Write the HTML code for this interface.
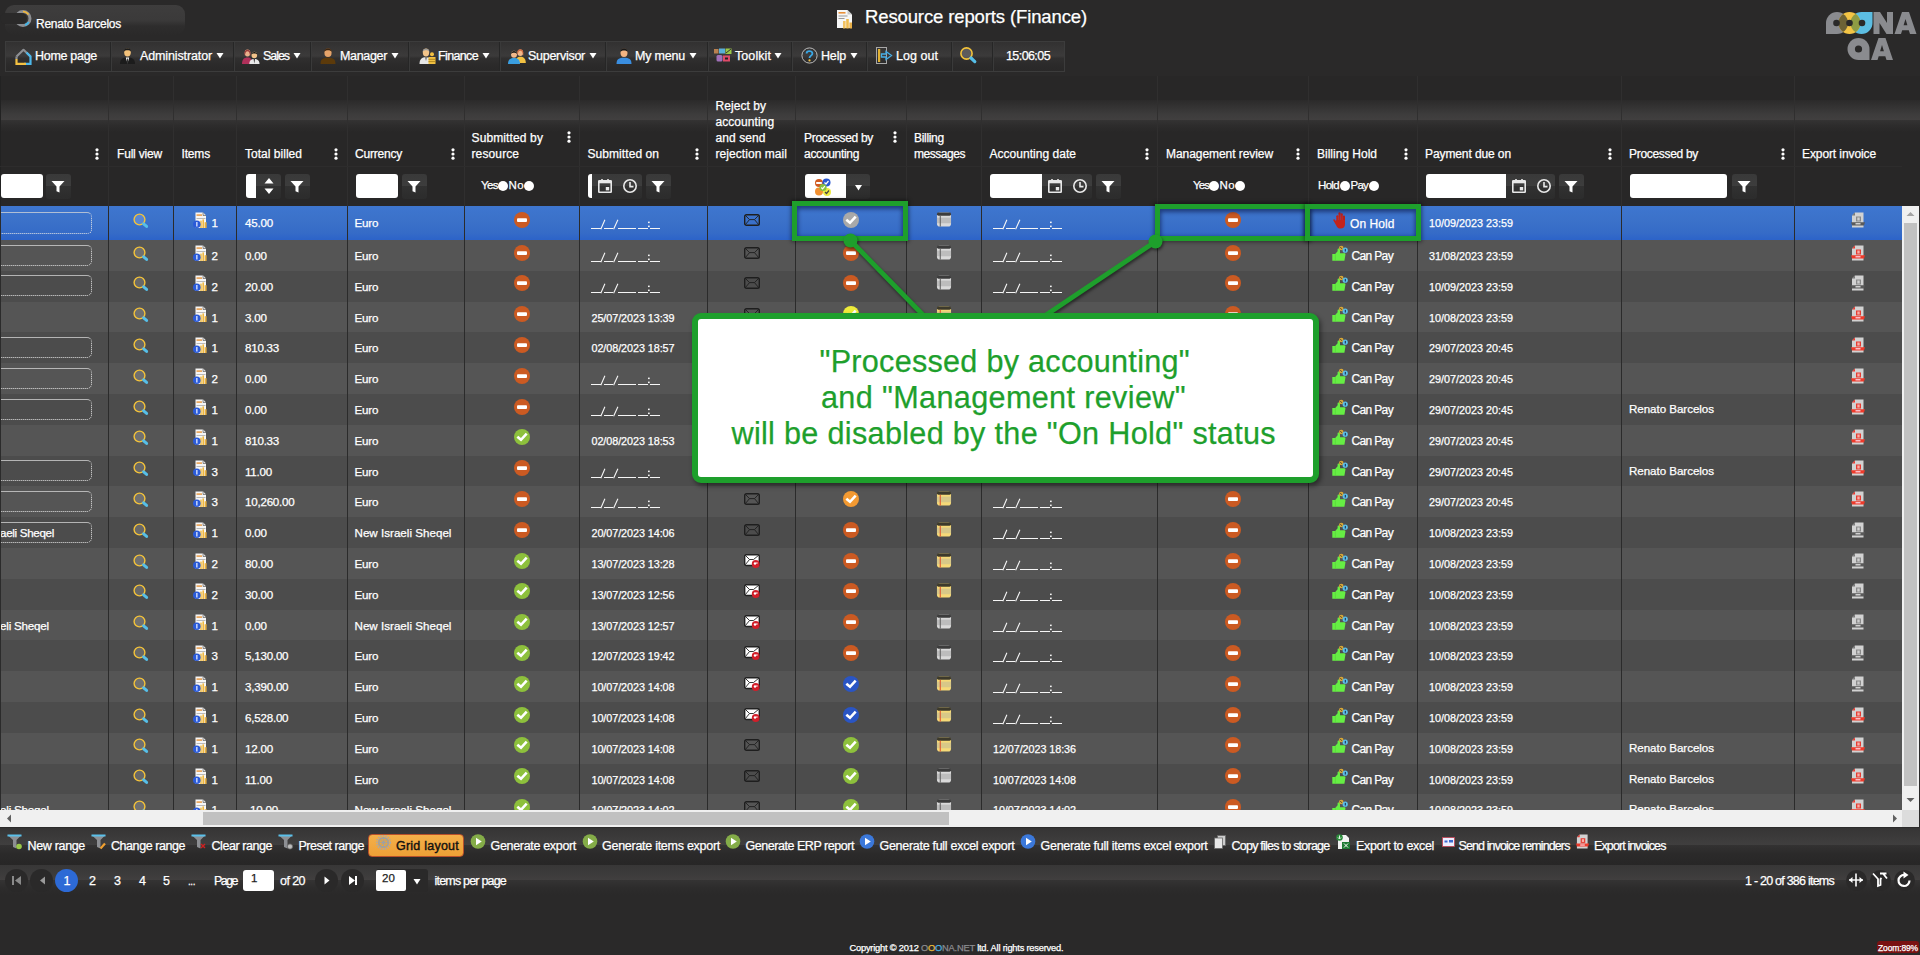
<!DOCTYPE html>
<html><head><meta charset="utf-8"><title>Resource reports (Finance)</title>
<style>
*{box-sizing:border-box}
html,body{margin:0;padding:0}
body{width:1920px;height:955px;overflow:hidden;position:relative;background:#2a2929;font-family:"Liberation Sans", sans-serif;color:#fff;font-size:12px}
.a{position:absolute}
.t{position:absolute;white-space:nowrap;line-height:1;-webkit-text-stroke:0.25px currentColor}
svg{display:block;overflow:visible}
</style></head>
<body>
<svg width="0" height="0" style="position:absolute">
<defs>
<symbol id="mag" viewBox="0 0 16 16"><circle cx="6.5" cy="6.5" r="5.4" fill="rgba(255,255,255,0.16)" stroke="#f4c33a" stroke-width="1.4"/><path d="M10.6 10.8 L13.6 13.4" stroke="#56bfe8" stroke-width="3" stroke-linecap="round"/></symbol>
<symbol id="doc" viewBox="0 0 16 16"><path d="M2.5 0.5h7.5l3 3v12.5h-10.5z" fill="#f6f6f6"/><path d="M10 0.5v3h3" fill="#d8d8d8" stroke="#333" stroke-width="0.5"/><rect x="3.5" y="2.3" width="5.5" height="1.6" fill="#e8a050"/><rect x="3.5" y="6.2" width="9" height="0.8" fill="#aaa"/><rect x="7.2" y="8.6" width="1.6" height="7.4" fill="#f2c050"/><rect x="9.4" y="7.4" width="1.6" height="8.6" fill="#f0b840"/><rect x="11.6" y="10.2" width="2" height="5.8" fill="#e8b040"/><circle cx="3.8" cy="12.2" r="3.8" fill="#2b5bd8"/><rect x="3.2" y="10" width="1.3" height="4.5" fill="#dfe8ff"/></symbol>
<symbol id="minus" viewBox="0 0 16 16"><circle cx="8" cy="8" r="8" fill="#cb5a22"/><rect x="3" y="6.2" width="10" height="3.8" rx="1" fill="#fff"/></symbol>
<symbol id="chk" viewBox="0 0 16 16"><path d="M4.3 8.5 L7 10.8 L11.8 5.6" fill="none" stroke="#fff" stroke-width="2.6" stroke-linecap="square" stroke-linejoin="miter"/></symbol>
<symbol id="env" viewBox="0 0 16 12"><rect x="0.7" y="0.7" width="14.6" height="10.6" rx="1.8" fill="none" stroke="#1e1e1e" stroke-width="1.4"/><path d="M1.2 1.2 L5.5 5.6 H10.5 L14.8 1.2 M1.2 10.8 L5.5 5.6 M14.8 10.8 L10.5 5.6" fill="none" stroke="#1e1e1e" stroke-width="0.9"/></symbol>
<symbol id="envr" viewBox="0 0 16 14"><rect x="0.7" y="0.7" width="14.6" height="10.8" rx="1.6" fill="#fff" stroke="#222" stroke-width="1.4"/><path d="M1.2 1.2 L5.5 5.5 H9.5 L14.8 1.2 M1.2 10.8 L5.5 5.5" fill="none" stroke="#222" stroke-width="0.9"/><circle cx="11.7" cy="10" r="3.9" fill="#d11f2a"/><circle cx="11" cy="9.5" r="1.2" fill="#fff"/><circle cx="12.9" cy="9" r="0.8" fill="#fff"/></symbol>
<symbol id="nbg" viewBox="0 0 16 16"><rect x="0.5" y="0.5" width="15" height="15" rx="3" fill="#dadada"/><rect x="0.5" y="0.5" width="15" height="3.5" rx="1.5" fill="#3c3c3c"/><rect x="0.5" y="6" width="15" height="6" fill="#bdbdbd"/><path d="M4 4v11.5" stroke="#555" stroke-width="1"/></symbol>
<symbol id="nby" viewBox="0 0 16 16"><rect x="0.5" y="0.5" width="15" height="15" rx="3" fill="#f6da78"/><rect x="0.5" y="0.5" width="15" height="3.5" rx="1.5" fill="#3d3a2c"/><rect x="0.5" y="6" width="15" height="6" fill="#d8c888"/><path d="M4 4v11.5" stroke="#e0502a" stroke-width="1.1"/></symbol>
<symbol id="thumb" viewBox="0 0 16 16"><path d="M0.3 9 H3.2 L5.6 6.2 V4.3 C5.6 3.3 7.6 3.1 8 4.4 V8.2 H12.4 C13.3 8.2 13.6 9 13.4 9.7 L12.4 15.8 H0.3 Z" fill="#66ee44"/><path d="M3.3 9.3 V15.6" stroke="#55cc38" stroke-width="0.6"/><circle cx="9.3" cy="3" r="2.3" fill="#d8a838"/><path d="M8.2 2.3 l2 1.5" stroke="#333" stroke-width="0.8"/><circle cx="13.2" cy="5.2" r="2.6" fill="#5cc0ea"/><rect x="12.8" y="3.9" width="0.9" height="2.6" fill="#113"/></symbol>
<symbol id="hand" viewBox="0 0 13 17"><rect x="3.3" y="3.2" width="2.1" height="8" rx="1.05" fill="#c4231b"/><rect x="5.5" y="0.3" width="2.1" height="10" rx="1.05" fill="#c4231b"/><rect x="7.7" y="1.3" width="2.1" height="9" rx="1.05" fill="#c4231b"/><rect x="9.9" y="3.4" width="2.1" height="8" rx="1.05" fill="#b82018"/><path d="M3.3 8 H12 V12 C12 15 10.3 16.6 7.6 16.6 C5.2 16.6 4 15.4 3.3 13.5 L0.4 8.6 C-0.1 7.6 0.9 6.8 1.7 7.6 L3.3 9.5z" fill="#c4231b"/></symbol>
<symbol id="pdfg" viewBox="0 0 14 16"><path d="M4 0.5h8.5v15h-11.5v-12z" fill="#d2d2d2"/><path d="M4 0.5 L1 3.5 H4z" fill="#777"/><rect x="5" y="4.5" width="5" height="5" fill="#8a8a8a"/><rect x="6.3" y="5.5" width="2.4" height="3" fill="#cfcfcf"/><path d="M0 10.2 H14 L13 13.4 H1z" fill="#5a5a5a"/><rect x="4.5" y="11.2" width="5" height="1.2" fill="#eee"/></symbol>
<symbol id="pdfr" viewBox="0 0 14 16"><path d="M4 0.5h8.5v15h-11.5v-12z" fill="#d2d2d2"/><path d="M4 0.5 L1 3.5 H4z" fill="#e83a30"/><rect x="5" y="4.5" width="5" height="5" fill="#e83a30"/><rect x="6.3" y="5.5" width="2.4" height="3" fill="#f6b0a8"/><path d="M0 10.2 H14 L13 13.4 H1z" fill="#ee3a2a"/><rect x="4.5" y="11.2" width="5" height="1.2" fill="#fde"/></symbol>
<symbol id="kebab" viewBox="0 0 4 12"><circle cx="2" cy="1.8" r="1.6" fill="#fff"/><circle cx="2" cy="6" r="1.6" fill="#fff"/><circle cx="2" cy="10.2" r="1.6" fill="#fff"/></symbol>
<symbol id="funnel" viewBox="0 0 16 16"><path d="M1.5 3h13l-5 5.5V14.5l-3-1.2V8.5z" fill="#fff"/></symbol>
<symbol id="cal" viewBox="0 0 16 16"><rect x="1.8" y="2.8" width="12.4" height="11.4" rx="0.5" fill="none" stroke="#e8e8e8" stroke-width="1.6"/><rect x="1.8" y="2.8" width="12.4" height="2.5" fill="#e8e8e8"/><rect x="4.2" y="1" width="1.6" height="3" fill="#e8e8e8"/><rect x="10.2" y="1" width="1.6" height="3" fill="#e8e8e8"/><rect x="8.8" y="9" width="3.4" height="3.4" fill="#e8e8e8"/></symbol>
<symbol id="clock" viewBox="0 0 16 16"><circle cx="8" cy="8" r="6.2" fill="none" stroke="#e8e8e8" stroke-width="1.6"/><path d="M8 4V8.6H11.5" fill="none" stroke="#e8e8e8" stroke-width="1.6"/></symbol>
<symbol id="tri" viewBox="0 0 8 8"><path d="M0 1h8L4 7.5z" fill="#fff"/></symbol>
</defs></svg><div class="a" style="left:5px;top:5px;width:180px;height:30px;border-radius:9px;background:linear-gradient(#3e3d3d 0%,#3b3a3a 50%,#2e2d2d 70%,#2a2929 100%)"></div><svg class="a" style="left:14px;top:9px" width="20" height="20"><circle cx="9" cy="9.5" r="7" fill="none" stroke="#8d8f93" stroke-width="3"/><path d="M9 2.5 A7 7 0 0 1 14.5 5.5" stroke="#f2b83a" stroke-width="1.5" fill="none"/><path d="M14.8 13 A7 7 0 0 1 11 16" stroke="#45b5e5" stroke-width="2" fill="none"/></svg><div class="a" style="left:0;top:13px;width:27px;height:11px;border-radius:6px;background:#2a2929"></div><div class="t" style="left:36px;top:17.84px;font-size:12px;color:#fff;letter-spacing:-0.248px;">Renato Barcelos</div><svg class="a" style="left:836px;top:9px" width="18" height="20" viewBox="0 0 18 20"><path d="M1 1h10.5l4.5 4.5V19H1z" fill="#f6f6f6"/><path d="M11.5 1v4.5H16z" fill="#c8c8c8"/><rect x="2.5" y="3" width="7" height="1.6" fill="#e8903a"/><rect x="2.5" y="6.5" width="9" height="1" fill="#999"/><rect x="2.5" y="9" width="6" height="1" fill="#999"/><rect x="7" y="12" width="2.6" height="7.5" fill="#f2c262"/><rect x="10.2" y="10" width="2.6" height="9.5" fill="#f0bc50"/><rect x="13.4" y="13.5" width="2.6" height="6" fill="#e8b048"/></svg><div class="t" style="left:865px;top:8.34px;font-size:18.5px;color:#fff;letter-spacing:-0.122px;">Resource reports (Finance)</div><svg class="a" style="left:1826px;top:12px" width="92" height="50" viewBox="0 0 92 50">
<defs><clipPath id="cyel"><circle cx="23.5" cy="11" r="11"/></clipPath></defs>
<path d="M0 22 V11 A11 11 0 0 1 11 0 A11 11 0 0 1 22 11 A11 11 0 0 1 11 22 Z" fill="#8a8b8f"/>
<path d="M35.5 0 H46.5 V11 A11 11 0 0 1 35.5 22 A11 11 0 0 1 24.5 11 A11 11 0 0 1 35.5 0 Z" fill="#5cbde2"/>
<circle cx="23.5" cy="11" r="11" fill="#f3c445"/>
<g clip-path="url(#cyel)"><path d="M0 22 V11 A11 11 0 0 1 11 0 A11 11 0 0 1 22 11 A11 11 0 0 1 11 22 Z" fill="#6d6236"/><path d="M35.5 0 H46.5 V11 A11 11 0 0 1 35.5 22 A11 11 0 0 1 24.5 11 A11 11 0 0 1 35.5 0 Z" fill="#8e9c44"/></g>
<circle cx="10.5" cy="11" r="3.3" fill="#2a2929"/><circle cx="23.5" cy="11" r="3.3" fill="#2a2929"/><circle cx="36" cy="11" r="3.3" fill="#2a2929"/>
<path d="M47.5 0 H54 L61 11 V0 H67 V22 H60.5 L53.5 11 V22 H47.5z" fill="#8a8b8f"/>
<path d="M68.5 22 L76 0 H83 L90.5 22 H84 L82.8 18.2 H76.2 L75 22z M77.6 13.3 H81.4 L79.5 7z" fill="#8a8b8f"/>
<path d="M43 48 H32.5 A11 11 0 0 1 21.5 37 A11 11 0 0 1 32.5 26 A11 11 0 0 1 43.5 37 V48z" fill="#8a8b8f"/><circle cx="32.5" cy="37" r="3.6" fill="#2a2929"/>
<path d="M45 48 L52.5 26 H59.5 L67 48 H60.5 L59.3 44.2 H52.7 L51.5 48z M54.1 39.3 H57.9 L56 33z" fill="#8a8b8f"/>
</svg><div class="a" style="left:5px;top:41px;width:1060px;height:31px;border:1px solid #3c3c3c;background:linear-gradient(#323131 0%,#383737 30%,#3b3a3a 48%,#302f2f 56%,#2b2a2a 80%,#292828 100%)"></div><div class="a" style="left:110px;top:42px;width:1px;height:29px;background:#262626"></div><div class="a" style="left:111px;top:42px;width:1px;height:29px;background:#3a3a3a"></div><div class="a" style="left:233px;top:42px;width:1px;height:29px;background:#262626"></div><div class="a" style="left:234px;top:42px;width:1px;height:29px;background:#3a3a3a"></div><div class="a" style="left:310px;top:42px;width:1px;height:29px;background:#262626"></div><div class="a" style="left:311px;top:42px;width:1px;height:29px;background:#3a3a3a"></div><div class="a" style="left:408px;top:42px;width:1px;height:29px;background:#262626"></div><div class="a" style="left:409px;top:42px;width:1px;height:29px;background:#3a3a3a"></div><div class="a" style="left:499px;top:42px;width:1px;height:29px;background:#262626"></div><div class="a" style="left:500px;top:42px;width:1px;height:29px;background:#3a3a3a"></div><div class="a" style="left:605px;top:42px;width:1px;height:29px;background:#262626"></div><div class="a" style="left:606px;top:42px;width:1px;height:29px;background:#3a3a3a"></div><div class="a" style="left:707px;top:42px;width:1px;height:29px;background:#262626"></div><div class="a" style="left:708px;top:42px;width:1px;height:29px;background:#3a3a3a"></div><div class="a" style="left:791px;top:42px;width:1px;height:29px;background:#262626"></div><div class="a" style="left:792px;top:42px;width:1px;height:29px;background:#3a3a3a"></div><div class="a" style="left:866px;top:42px;width:1px;height:29px;background:#262626"></div><div class="a" style="left:867px;top:42px;width:1px;height:29px;background:#3a3a3a"></div><div class="a" style="left:951px;top:42px;width:1px;height:29px;background:#262626"></div><div class="a" style="left:952px;top:42px;width:1px;height:29px;background:#3a3a3a"></div><div class="a" style="left:992px;top:42px;width:1px;height:29px;background:#262626"></div><div class="a" style="left:993px;top:42px;width:1px;height:29px;background:#3a3a3a"></div><div class="t" style="left:35px;top:50.42px;font-size:12.5px;color:#fff;letter-spacing:-0.292px;">Home page</div><div class="t" style="left:140px;top:50.42px;font-size:12.5px;color:#fff;letter-spacing:-0.126px;">Administrator</div><svg class="a" style="left:216px;top:52px" width="8" height="7"><use href="#tri"/></svg><div class="t" style="left:263px;top:50.42px;font-size:12.5px;color:#fff;letter-spacing:-1.054px;">Sales</div><svg class="a" style="left:293px;top:52px" width="8" height="7"><use href="#tri"/></svg><div class="t" style="left:340px;top:50.42px;font-size:12.5px;color:#fff;letter-spacing:-0.334px;">Manager</div><svg class="a" style="left:391px;top:52px" width="8" height="7"><use href="#tri"/></svg><div class="t" style="left:438px;top:50.42px;font-size:12.5px;color:#fff;letter-spacing:-0.639px;">Finance</div><svg class="a" style="left:482px;top:52px" width="8" height="7"><use href="#tri"/></svg><div class="t" style="left:528px;top:50.42px;font-size:12.5px;color:#fff;letter-spacing:-0.275px;">Supervisor</div><svg class="a" style="left:589px;top:52px" width="8" height="7"><use href="#tri"/></svg><div class="t" style="left:635px;top:50.42px;font-size:12.5px;color:#fff;letter-spacing:-0.201px;">My menu</div><svg class="a" style="left:689px;top:52px" width="8" height="7"><use href="#tri"/></svg><div class="t" style="left:735px;top:50.42px;font-size:12.5px;color:#fff;letter-spacing:0.081px;">Toolkit</div><svg class="a" style="left:774px;top:52px" width="8" height="7"><use href="#tri"/></svg><div class="t" style="left:821px;top:50.42px;font-size:12.5px;color:#fff;letter-spacing:-0.177px;">Help</div><svg class="a" style="left:850px;top:52px" width="8" height="7"><use href="#tri"/></svg><div class="t" style="left:896px;top:50.42px;font-size:12.5px;color:#fff;letter-spacing:0.042px;">Log out</div><div class="t" style="left:1006px;top:50.42px;font-size:12.5px;color:#fff;letter-spacing:-0.582px;">15:06:05</div><svg class="a" style="left:15px;top:48px" width="17" height="17" viewBox="0 0 17 17"><path d="M1.5 8.5 L8.5 1.8 L15.5 8.5" fill="none" stroke="#8d8f93" stroke-width="2.2" stroke-linejoin="round"/><path d="M11.5 4.5 L15.5 8.5 V15.8 H9" fill="none" stroke="#4db8ea" stroke-width="2.2"/><path d="M1.5 11 V15.8 H11" fill="none" stroke="#f4c142" stroke-width="2.2"/><path d="M1.5 8.5 V11" stroke="#8d8f93" stroke-width="2.2"/></svg><svg class="a" style="left:119px;top:46px" width="17" height="18" viewBox="0 0 17 18"><ellipse cx="8.5" cy="6.5" rx="3.3" ry="4" fill="#f4c27a"/><path d="M5 5.5 C4.5 1 12.5 1 12 5.5 C11 3.8 6 3.8 5 5.5z" fill="#1a1a1a"/><path d="M1 18 C1 13 3.5 11.5 8.5 11.5 C13.5 11.5 16 13 16 18z" fill="#1c1c1c"/><path d="M6.8 11.5 L8.5 17.5 L10.2 11.5z" fill="#fff"/><path d="M8.1 12.5 h0.8 l0.3 4 l-0.7 0.8 l-0.7 -0.8z" fill="#333"/></svg><svg class="a" style="left:242px;top:47px" width="18" height="17" viewBox="0 0 18 17"><ellipse cx="5.5" cy="6" rx="2.8" ry="3.4" fill="#eab08c"/><path d="M2.5 6.5 C2 1.5 9 1.5 8.5 6.5 L8.3 9 C7.5 7 7.8 4.5 5.5 4.3 C3.2 4.5 3.5 7 2.7 9z" fill="#9a3a3a"/><path d="M0 17 C0 12.5 2 10.5 5.5 10.5 C9 10.5 10 12 10 17z" fill="#b0305a"/><ellipse cx="12.3" cy="8" rx="2.8" ry="3.3" fill="#f2c28a"/><path d="M9.3 7.5 C9 4 15.5 4 15.3 7.5 C14.5 6 10 6 9.3 7.5z" fill="#1a1a1a"/><path d="M7.3 17 C7.3 13.5 9 12 12.3 12 C15.6 12 17.5 13.5 17.5 17z" fill="#e8e8e8"/><path d="M11.6 12 L12.3 16.5 L13 12z" fill="#333"/></svg><svg class="a" style="left:320px;top:46px" width="16" height="18" viewBox="0 0 16 18"><ellipse cx="8" cy="6.8" rx="3.6" ry="4.3" fill="#e6a46a"/><path d="M4.3 6 C3.8 1 12.2 1 11.7 6 C11 3.8 5 3.8 4.3 6z" fill="#3a2410"/><path d="M0.5 18 C0.5 13 3 11.8 8 11.8 C13 11.8 15.5 13 15.5 18z" fill="#5c3a0a"/></svg><svg class="a" style="left:419px;top:46px" width="17" height="18" viewBox="0 0 17 18"><ellipse cx="7" cy="6.5" rx="3.2" ry="3.9" fill="#f2c48a"/><path d="M3.6 6 C3 1.5 11 1.5 10.4 6 C9.5 3.8 4.5 3.8 3.6 6z" fill="#9a9a9a"/><path d="M0.5 18 C0.5 13 3 11.3 7 11.3 C10 11.3 11 12 11.5 13 V18z" fill="#e6e6e6"/><path d="M6.3 11.3 L7 15 L7.7 11.3z" fill="#333"/><rect x="9.5" y="11" width="7" height="7" fill="#f2c142"/><path d="M9.5 13.3h7M9.5 15.6h7" stroke="#a07818" stroke-width="0.8"/><circle cx="13" cy="8.3" r="2" fill="#f2c142"/></svg><svg class="a" style="left:508px;top:47px" width="18" height="17" viewBox="0 0 18 17"><ellipse cx="12.3" cy="5.8" rx="2.8" ry="3.3" fill="#f2b88a"/><path d="M9.3 5.5 C9 1 15.5 1 15.3 5.5 L15.3 8.5 C14.5 6.5 14.5 4 12.3 3.8 C10 4 10.2 6.5 9.5 8.5z" fill="#d06a40"/><path d="M7.5 16 C7.5 11.5 9.5 9.8 12.3 9.8 C15.5 9.8 17.8 11.5 17.8 16z" fill="#f2c142"/><ellipse cx="6" cy="7.3" rx="3" ry="3.5" fill="#f2b88a"/><path d="M3 7 C2.7 3 9.3 3 9 7 C8 5.3 4 5.3 3 7z" fill="#1a1a1a"/><path d="M0 17 C0 12.5 2.5 11 6 11 C9.5 11 12 12.5 12 17z" fill="#3a9ee0"/></svg><svg class="a" style="left:616px;top:46px" width="16" height="18" viewBox="0 0 16 18"><ellipse cx="8" cy="6.8" rx="3.5" ry="4.2" fill="#f2b482"/><path d="M4.3 6.3 C3.8 1 12.2 1 11.7 6.3 C11 3.8 5 3.8 4.3 6.3z" fill="#1a1a1a"/><path d="M0.5 18 C0.5 13 3 11.8 8 11.8 C13 11.8 15.5 13 15.5 18z" fill="#3a8ee0"/></svg><svg class="a" style="left:714px;top:48px" width="18" height="15" viewBox="0 0 18 15"><rect x="0" y="1" width="4.5" height="4.5" fill="#b88050"/><rect x="5" y="0.5" width="6" height="5" fill="#5ab0d8"/><rect x="11.5" y="0.5" width="6" height="5.5" fill="#9ac848"/><path d="M12 5 l5-4" stroke="#333" stroke-width="1"/><rect x="2.5" y="7" width="6" height="6.5" rx="1.5" fill="#a070b8"/><rect x="9" y="7.5" width="7" height="6" fill="#e04a68"/><rect x="11" y="9.5" width="3" height="2" fill="#222"/></svg><svg class="a" style="left:801px;top:47px" width="17" height="17" viewBox="0 0 17 17"><circle cx="8.5" cy="8.5" r="7.6" fill="none" stroke="#c8c8c8" stroke-width="0.9"/><path d="M5.6 6.4 C5.6 3.3 11.4 3.3 11.4 6.4 C11.4 8.6 8.5 8.6 8.5 11" fill="none" stroke="#3aa8e6" stroke-width="1.8"/><circle cx="8.5" cy="13.4" r="1.1" fill="#f2c142"/></svg><svg class="a" style="left:876px;top:47px" width="17" height="17" viewBox="0 0 17 17"><rect x="0.5" y="0.5" width="10" height="16" fill="none" stroke="#a8a8a8" stroke-width="1"/><rect x="2" y="2" width="2.2" height="13" fill="#e2b232"/><path d="M5.5 7 H10 V4.5 L15.5 8.5 L10 12.5 V10 H5.5z" fill="none" stroke="#45aee6" stroke-width="1.3"/></svg><svg class="a" style="left:959px;top:46px" width="20" height="20" viewBox="0 0 20 20"><circle cx="7.5" cy="7.5" r="5.6" fill="rgba(255,255,255,0.18)" stroke="#f4c33a" stroke-width="1.6"/><path d="M12 12 L15.8 15.6" stroke="#56bfe8" stroke-width="3.2" stroke-linecap="round"/></svg><div class="a" style="left:0;top:76px;width:1920px;height:130px;background:#282727"></div><div class="a" style="left:0;top:100px;width:1920px;height:32px;background:linear-gradient(#2b2a2a 0%,#353434 25%,#3d3c3c 45%,#413f3f 62%,#343333 62.5%,#2d2c2c 80%,#282727 100%)"></div><div class="a" style="left:108px;top:76px;width:1px;height:130px;background:#302f2f"></div><div class="a" style="left:173px;top:76px;width:1px;height:130px;background:#302f2f"></div><div class="a" style="left:236px;top:76px;width:1px;height:130px;background:#302f2f"></div><div class="a" style="left:347px;top:76px;width:1px;height:130px;background:#302f2f"></div><div class="a" style="left:464px;top:76px;width:1px;height:130px;background:#302f2f"></div><div class="a" style="left:579px;top:76px;width:1px;height:130px;background:#302f2f"></div><div class="a" style="left:707px;top:76px;width:1px;height:130px;background:#302f2f"></div><div class="a" style="left:795px;top:76px;width:1px;height:130px;background:#302f2f"></div><div class="a" style="left:906px;top:76px;width:1px;height:130px;background:#302f2f"></div><div class="a" style="left:981px;top:76px;width:1px;height:130px;background:#302f2f"></div><div class="a" style="left:1157px;top:76px;width:1px;height:130px;background:#302f2f"></div><div class="a" style="left:1308px;top:76px;width:1px;height:130px;background:#302f2f"></div><div class="a" style="left:1417px;top:76px;width:1px;height:130px;background:#302f2f"></div><div class="a" style="left:1621px;top:76px;width:1px;height:130px;background:#302f2f"></div><div class="a" style="left:1794px;top:76px;width:1px;height:130px;background:#302f2f"></div><div class="a" style="left:0;top:76px;width:1px;height:130px;background:#222"></div><div class="a" style="left:0;top:166px;width:1902px;height:1px;background:#2d2c2c"></div><div class="t" style="left:117px;top:148.14px;font-size:12px;color:#fff;letter-spacing:-0.186px;">Full view</div><div class="t" style="left:181.5px;top:148.14px;font-size:12px;color:#fff;letter-spacing:-0.168px;">Items</div><div class="t" style="left:245px;top:148.14px;font-size:12px;color:#fff;letter-spacing:0.025px;">Total billed</div><div class="t" style="left:355px;top:148.14px;font-size:12px;color:#fff;letter-spacing:-0.210px;">Currency</div><div class="t" style="left:471.5px;top:132.14px;font-size:12px;color:#fff;letter-spacing:0.122px;">Submitted by</div><div class="t" style="left:471.5px;top:148.14px;font-size:12px;color:#fff;letter-spacing:0.122px;">resource</div><div class="t" style="left:587.5px;top:148.14px;font-size:12px;color:#fff;letter-spacing:0.066px;">Submitted on</div><div class="t" style="left:715.5px;top:100.14px;font-size:12px;color:#fff;letter-spacing:0.063px;">Reject by</div><div class="t" style="left:715.5px;top:116.14px;font-size:12px;color:#fff;letter-spacing:0.066px;">accounting</div><div class="t" style="left:715.5px;top:132.14px;font-size:12px;color:#fff;letter-spacing:0.070px;">and send</div><div class="t" style="left:715.5px;top:148.14px;font-size:12px;color:#fff;letter-spacing:0.058px;">rejection mail</div><div class="t" style="left:804px;top:132.14px;font-size:12px;color:#fff;letter-spacing:-0.309px;">Processed by</div><div class="t" style="left:804px;top:148.14px;font-size:12px;color:#fff;letter-spacing:-0.296px;">accounting</div><div class="t" style="left:914px;top:132.14px;font-size:12px;color:#fff;letter-spacing:-0.309px;">Billing</div><div class="t" style="left:914px;top:148.14px;font-size:12px;color:#fff;letter-spacing:-0.461px;">messages</div><div class="t" style="left:989.5px;top:148.14px;font-size:12px;color:#fff;letter-spacing:0.029px;">Accounting date</div><div class="t" style="left:1166px;top:148.14px;font-size:12px;color:#fff;letter-spacing:-0.062px;">Management review</div><div class="t" style="left:1317px;top:148.14px;font-size:12px;color:#fff;letter-spacing:-0.002px;">Billing Hold</div><div class="t" style="left:1425px;top:148.14px;font-size:12px;color:#fff;letter-spacing:-0.100px;">Payment due on</div><div class="t" style="left:1629px;top:148.14px;font-size:12px;color:#fff;letter-spacing:-0.309px;">Processed by</div><div class="t" style="left:1802px;top:148.14px;font-size:12px;color:#fff;letter-spacing:-0.098px;">Export invoice</div><svg class="a" style="left:95px;top:148px" width="4" height="12"><use href="#kebab"/></svg><svg class="a" style="left:334px;top:148px" width="4" height="12"><use href="#kebab"/></svg><svg class="a" style="left:451px;top:148px" width="4" height="12"><use href="#kebab"/></svg><svg class="a" style="left:567px;top:131px" width="4" height="12"><use href="#kebab"/></svg><svg class="a" style="left:695px;top:148px" width="4" height="12"><use href="#kebab"/></svg><svg class="a" style="left:893px;top:131px" width="4" height="12"><use href="#kebab"/></svg><svg class="a" style="left:1145px;top:148px" width="4" height="12"><use href="#kebab"/></svg><svg class="a" style="left:1296px;top:148px" width="4" height="12"><use href="#kebab"/></svg><svg class="a" style="left:1404px;top:148px" width="4" height="12"><use href="#kebab"/></svg><svg class="a" style="left:1608px;top:148px" width="4" height="12"><use href="#kebab"/></svg><svg class="a" style="left:1781px;top:148px" width="4" height="12"><use href="#kebab"/></svg><div class="a" style="left:1px;top:174px;width:42px;height:24px;background:#fff;border-radius:3px"></div><div class="a" style="left:46px;top:174px;width:25px;height:25px;border-radius:3px;background:linear-gradient(#393939 0%,#3d3d3d 46%,#313131 48%,#2c2c2c 100%)"></div><svg class="a" style="left:50px;top:177.5px" width="16" height="16"><use href="#funnel"/></svg><div class="a" style="left:246px;top:174px;width:12px;height:24px;background:#fff;border-radius:3px 0 0 3px"></div><div class="a" style="left:256px;top:174px;width:25px;height:25px;border-radius:0 3px 3px 0;background:linear-gradient(#393939 0%,#3d3d3d 46%,#313131 48%,#2c2c2c 100%)"></div><svg class="a" style="left:263px;top:176px" width="12" height="20" viewBox="0 0 12 20"><path d="M1.5 7.5h9L6 2z M1.5 12.5h9L6 18z" fill="#fff"/></svg><div class="a" style="left:285px;top:174px;width:25px;height:25px;border-radius:3px;background:linear-gradient(#393939 0%,#3d3d3d 46%,#313131 48%,#2c2c2c 100%)"></div><svg class="a" style="left:289px;top:177.5px" width="16" height="16"><use href="#funnel"/></svg><div class="a" style="left:356px;top:174px;width:42px;height:24px;background:#fff;border-radius:3px"></div><div class="a" style="left:402px;top:174px;width:25px;height:25px;border-radius:3px;background:linear-gradient(#393939 0%,#3d3d3d 46%,#313131 48%,#2c2c2c 100%)"></div><svg class="a" style="left:406px;top:177.5px" width="16" height="16"><use href="#funnel"/></svg><div class="a" style="left:588px;top:174px;width:4px;height:24px;background:#fff;border-radius:3px 0 0 3px"></div><div class="a" style="left:592px;top:174px;width:50px;height:25px;border-radius:0 3px 3px 0;background:linear-gradient(#393939 0%,#3d3d3d 46%,#313131 48%,#2c2c2c 100%)"></div><svg class="a" style="left:597px;top:178px" width="16" height="16"><use href="#cal"/></svg><svg class="a" style="left:621.5px;top:178px" width="16" height="16"><use href="#clock"/></svg><div class="a" style="left:646px;top:174px;width:25px;height:25px;border-radius:3px;background:linear-gradient(#393939 0%,#3d3d3d 46%,#313131 48%,#2c2c2c 100%)"></div><svg class="a" style="left:650px;top:177.5px" width="16" height="16"><use href="#funnel"/></svg><div class="a" style="left:990px;top:174px;width:52px;height:24px;background:#fff;border-radius:3px 0 0 3px"></div><div class="a" style="left:1042px;top:174px;width:50px;height:25px;border-radius:0 3px 3px 0;background:linear-gradient(#393939 0%,#3d3d3d 46%,#313131 48%,#2c2c2c 100%)"></div><svg class="a" style="left:1047px;top:178px" width="16" height="16"><use href="#cal"/></svg><svg class="a" style="left:1071.5px;top:178px" width="16" height="16"><use href="#clock"/></svg><div class="a" style="left:1096px;top:174px;width:25px;height:25px;border-radius:3px;background:linear-gradient(#393939 0%,#3d3d3d 46%,#313131 48%,#2c2c2c 100%)"></div><svg class="a" style="left:1100px;top:177.5px" width="16" height="16"><use href="#funnel"/></svg><div class="a" style="left:1426px;top:174px;width:80px;height:24px;background:#fff;border-radius:3px 0 0 3px"></div><div class="a" style="left:1506px;top:174px;width:49px;height:25px;border-radius:0 3px 3px 0;background:linear-gradient(#393939 0%,#3d3d3d 46%,#313131 48%,#2c2c2c 100%)"></div><svg class="a" style="left:1511px;top:178px" width="16" height="16"><use href="#cal"/></svg><svg class="a" style="left:1535.5px;top:178px" width="16" height="16"><use href="#clock"/></svg><div class="a" style="left:1559px;top:174px;width:25px;height:25px;border-radius:3px;background:linear-gradient(#393939 0%,#3d3d3d 46%,#313131 48%,#2c2c2c 100%)"></div><svg class="a" style="left:1563px;top:177.5px" width="16" height="16"><use href="#funnel"/></svg><div class="a" style="left:1630px;top:174px;width:97px;height:24px;background:#fff;border-radius:3px"></div><div class="a" style="left:1732px;top:174px;width:25px;height:25px;border-radius:3px;background:linear-gradient(#393939 0%,#3d3d3d 46%,#313131 48%,#2c2c2c 100%)"></div><svg class="a" style="left:1736px;top:177.5px" width="16" height="16"><use href="#funnel"/></svg><div class="a" style="left:805px;top:174px;width:41px;height:24px;background:#fff;border-radius:3px 0 0 3px"></div><div class="a" style="left:846px;top:174px;width:24px;height:25px;border-radius:0 3px 3px 0;background:linear-gradient(#393939 0%,#3d3d3d 46%,#313131 48%,#2c2c2c 100%)"></div><svg class="a" style="left:853.5px;top:183.5px" width="9" height="7"><use href="#tri"/></svg><svg class="a" style="left:814px;top:178px" width="20" height="19" viewBox="0 0 20 19"><circle cx="5" cy="5" r="4" fill="#d05a20"/><rect x="2.2" y="4" width="5.6" height="2" fill="#fff"/><circle cx="12.5" cy="4.5" r="4" fill="#2a58d0"/><path d="M10.5 4.5l1.5 1.5l2.5-3" stroke="#fff" stroke-width="1.2" fill="none"/><circle cx="5" cy="13.5" r="4" fill="#f29030"/><circle cx="13" cy="14" r="4" fill="#eeea40"/><path d="M11 14l1.5 1.5l2.5-3" stroke="#444" stroke-width="1.2" fill="none"/><circle cx="9" cy="9.5" r="3.6" fill="#86c040"/><path d="M7.3 9.5l1.3 1.3l2.2-2.6" stroke="#fff" stroke-width="1.2" fill="none"/></svg><div class="t" style="left:481px;top:180.27px;font-size:11.5px;color:#fff;letter-spacing:-0.587px;">Yes</div><div class="a" style="left:498px;top:180.5px;width:10px;height:10px;border-radius:50%;background:#fff"></div><div class="t" style="left:508.5px;top:180.27px;font-size:11.5px;color:#fff;letter-spacing:0.400px;">No</div><div class="a" style="left:524px;top:180.5px;width:10px;height:10px;border-radius:50%;background:#fff"></div><div class="t" style="left:1193px;top:180.27px;font-size:11.5px;color:#fff;letter-spacing:-0.920px;">Yes</div><div class="a" style="left:1209px;top:180.5px;width:10px;height:10px;border-radius:50%;background:#fff"></div><div class="t" style="left:1219.5px;top:180.27px;font-size:11.5px;color:#fff;letter-spacing:0.400px;">No</div><div class="a" style="left:1235px;top:180.5px;width:10px;height:10px;border-radius:50%;background:#fff"></div><div class="t" style="left:1318px;top:180.27px;font-size:11.5px;color:#fff;letter-spacing:-0.663px;">Hold</div><div class="a" style="left:1340px;top:180.5px;width:10px;height:10px;border-radius:50%;background:#fff"></div><div class="t" style="left:1350.5px;top:180.27px;font-size:11.5px;color:#fff;letter-spacing:-0.772px;">Pay</div><div class="a" style="left:1369px;top:180.5px;width:10px;height:10px;border-radius:50%;background:#fff"></div><div class="a" style="left:0;top:206px;width:1902px;height:604px;overflow:hidden"><div class="a" style="left:0;top:0.00px;width:1902px;height:34.0px;background:linear-gradient(#3e76cf 0%,#3b71c9 45%,#356bc7 80%,#2c63c9 100%)"></div><div class="a" style="left:-10px;top:6px;width:102px;height:22px;border:1px dotted #e6e6e6;border-top:1px solid rgba(215,215,215,0.75);border-radius:0 5px 5px 0"></div><svg class="a" style="left:133px;top:7px" width="16" height="16"><use href="#mag"/></svg><svg class="a" style="left:193px;top:6px" width="16" height="16"><use href="#doc"/></svg><div class="t" style="left:211.5px;top:11.18px;font-size:11.6px;color:#fff;">1</div><div class="t" style="left:245px;top:11.18px;font-size:11.6px;color:#fff;letter-spacing:-0.232px;">45.00</div><div class="t" style="left:354.5px;top:11.18px;font-size:11.6px;color:#fff;letter-spacing:-0.214px;">Euro</div><svg class="a" style="left:514px;top:6px" width="16" height="16"><use href="#minus"/></svg><div class="a" style="left:591.0px;top:21.7px;width:9.5px;height:1.4px;background:#f6f6f6"></div><div class="a" style="left:604.0px;top:21.7px;width:9.3px;height:1.4px;background:#f6f6f6"></div><div class="a" style="left:617.8px;top:21.7px;width:18.2px;height:1.4px;background:#f6f6f6"></div><div class="a" style="left:638.3px;top:21.7px;width:9.5px;height:1.4px;background:#f6f6f6"></div><div class="a" style="left:649.8px;top:21.7px;width:9.8px;height:1.4px;background:#f6f6f6"></div><svg class="a" style="left:591px;top:12.7px" width="70" height="12"><path d="M9.8 10.3 L13.9 0.8 M22.6 10.3 L26.9 0.8" stroke="#f6f6f6" stroke-width="1.1"/><rect x="57" y="2.6" width="1.7" height="1.5" fill="#f6f6f6"/><rect x="57" y="6.6" width="1.7" height="1.5" fill="#f6f6f6"/></svg><svg class="a" style="left:744px;top:8px" width="16" height="12"><use href="#env"/></svg><svg class="a" style="left:843px;top:6px" width="16" height="16"><circle cx="8" cy="8" r="8" fill="#a9a9a9"/><use href="#chk"/></svg><svg class="a" style="left:936px;top:6px" width="16" height="15"><use href="#nbg"/></svg><div class="a" style="left:993.0px;top:21.7px;width:9.5px;height:1.4px;background:#f6f6f6"></div><div class="a" style="left:1006.0px;top:21.7px;width:9.3px;height:1.4px;background:#f6f6f6"></div><div class="a" style="left:1019.8px;top:21.7px;width:18.2px;height:1.4px;background:#f6f6f6"></div><div class="a" style="left:1040.3px;top:21.7px;width:9.5px;height:1.4px;background:#f6f6f6"></div><div class="a" style="left:1051.8px;top:21.7px;width:9.8px;height:1.4px;background:#f6f6f6"></div><svg class="a" style="left:993px;top:12.7px" width="70" height="12"><path d="M9.8 10.3 L13.9 0.8 M22.6 10.3 L26.9 0.8" stroke="#f6f6f6" stroke-width="1.1"/><rect x="57" y="2.6" width="1.7" height="1.5" fill="#f6f6f6"/><rect x="57" y="6.6" width="1.7" height="1.5" fill="#f6f6f6"/></svg><svg class="a" style="left:1225px;top:6px" width="16" height="16"><use href="#minus"/></svg><svg class="a" style="left:1333px;top:6px" width="13" height="17"><use href="#hand"/></svg><div class="t" style="left:1350px;top:11.84px;font-size:12px;color:#fff;letter-spacing:0.068px;">On Hold</div><div class="t" style="left:1429px;top:11.86px;font-size:10.8px;color:#fff;letter-spacing:-0.005px;">10/09/2023 23:59</div><svg class="a" style="left:1851px;top:6px" width="14" height="16"><use href="#pdfg"/></svg><div class="a" style="left:0;top:34.00px;width:1902px;height:30.8px;background:#555555"></div><div class="a" style="left:-10px;top:39px;width:102px;height:21px;border:1px dotted #e6e6e6;border-top:1px solid rgba(215,215,215,0.75);border-radius:0 5px 5px 0"></div><svg class="a" style="left:133px;top:40px" width="16" height="16"><use href="#mag"/></svg><svg class="a" style="left:193px;top:39px" width="16" height="16"><use href="#doc"/></svg><div class="t" style="left:211.5px;top:44.18px;font-size:11.6px;color:#fff;">2</div><div class="t" style="left:245px;top:44.18px;font-size:11.6px;color:#fff;letter-spacing:-0.226px;">0.00</div><div class="t" style="left:354.5px;top:44.18px;font-size:11.6px;color:#fff;letter-spacing:-0.214px;">Euro</div><svg class="a" style="left:514px;top:39px" width="16" height="16"><use href="#minus"/></svg><div class="a" style="left:591.0px;top:54.7px;width:9.5px;height:1.4px;background:#f6f6f6"></div><div class="a" style="left:604.0px;top:54.7px;width:9.3px;height:1.4px;background:#f6f6f6"></div><div class="a" style="left:617.8px;top:54.7px;width:18.2px;height:1.4px;background:#f6f6f6"></div><div class="a" style="left:638.3px;top:54.7px;width:9.5px;height:1.4px;background:#f6f6f6"></div><div class="a" style="left:649.8px;top:54.7px;width:9.8px;height:1.4px;background:#f6f6f6"></div><svg class="a" style="left:591px;top:45.7px" width="70" height="12"><path d="M9.8 10.3 L13.9 0.8 M22.6 10.3 L26.9 0.8" stroke="#f6f6f6" stroke-width="1.1"/><rect x="57" y="2.6" width="1.7" height="1.5" fill="#f6f6f6"/><rect x="57" y="6.6" width="1.7" height="1.5" fill="#f6f6f6"/></svg><svg class="a" style="left:744px;top:41px" width="16" height="12"><use href="#env"/></svg><svg class="a" style="left:843px;top:39px" width="16" height="16"><use href="#minus"/></svg><svg class="a" style="left:936px;top:39px" width="16" height="15"><use href="#nbg"/></svg><div class="a" style="left:993.0px;top:54.7px;width:9.5px;height:1.4px;background:#f6f6f6"></div><div class="a" style="left:1006.0px;top:54.7px;width:9.3px;height:1.4px;background:#f6f6f6"></div><div class="a" style="left:1019.8px;top:54.7px;width:18.2px;height:1.4px;background:#f6f6f6"></div><div class="a" style="left:1040.3px;top:54.7px;width:9.5px;height:1.4px;background:#f6f6f6"></div><div class="a" style="left:1051.8px;top:54.7px;width:9.8px;height:1.4px;background:#f6f6f6"></div><svg class="a" style="left:993px;top:45.7px" width="70" height="12"><path d="M9.8 10.3 L13.9 0.8 M22.6 10.3 L26.9 0.8" stroke="#f6f6f6" stroke-width="1.1"/><rect x="57" y="2.6" width="1.7" height="1.5" fill="#f6f6f6"/><rect x="57" y="6.6" width="1.7" height="1.5" fill="#f6f6f6"/></svg><svg class="a" style="left:1225px;top:39px" width="16" height="16"><use href="#minus"/></svg><svg class="a" style="left:1332px;top:39px" width="16" height="16"><use href="#thumb"/></svg><div class="t" style="left:1351.5px;top:43.84px;font-size:12px;color:#fff;letter-spacing:-0.647px;">Can Pay</div><div class="t" style="left:1429px;top:44.86px;font-size:10.8px;color:#fff;letter-spacing:-0.005px;">31/08/2023 23:59</div><svg class="a" style="left:1851px;top:39px" width="14" height="16"><use href="#pdfr"/></svg><div class="a" style="left:0;top:64.80px;width:1902px;height:30.8px;background:#4c4c4c"></div><div class="a" style="left:-10px;top:69px;width:102px;height:21px;border:1px dotted #e6e6e6;border-top:1px solid rgba(215,215,215,0.75);border-radius:0 5px 5px 0"></div><svg class="a" style="left:133px;top:70px" width="16" height="16"><use href="#mag"/></svg><svg class="a" style="left:193px;top:69px" width="16" height="16"><use href="#doc"/></svg><div class="t" style="left:211.5px;top:75.18px;font-size:11.6px;color:#fff;">2</div><div class="t" style="left:245px;top:75.18px;font-size:11.6px;color:#fff;letter-spacing:-0.232px;">20.00</div><div class="t" style="left:354.5px;top:75.18px;font-size:11.6px;color:#fff;letter-spacing:-0.214px;">Euro</div><svg class="a" style="left:514px;top:69px" width="16" height="16"><use href="#minus"/></svg><div class="a" style="left:591.0px;top:85.7px;width:9.5px;height:1.4px;background:#f6f6f6"></div><div class="a" style="left:604.0px;top:85.7px;width:9.3px;height:1.4px;background:#f6f6f6"></div><div class="a" style="left:617.8px;top:85.7px;width:18.2px;height:1.4px;background:#f6f6f6"></div><div class="a" style="left:638.3px;top:85.7px;width:9.5px;height:1.4px;background:#f6f6f6"></div><div class="a" style="left:649.8px;top:85.7px;width:9.8px;height:1.4px;background:#f6f6f6"></div><svg class="a" style="left:591px;top:76.7px" width="70" height="12"><path d="M9.8 10.3 L13.9 0.8 M22.6 10.3 L26.9 0.8" stroke="#f6f6f6" stroke-width="1.1"/><rect x="57" y="2.6" width="1.7" height="1.5" fill="#f6f6f6"/><rect x="57" y="6.6" width="1.7" height="1.5" fill="#f6f6f6"/></svg><svg class="a" style="left:744px;top:71px" width="16" height="12"><use href="#env"/></svg><svg class="a" style="left:843px;top:69px" width="16" height="16"><use href="#minus"/></svg><svg class="a" style="left:936px;top:69px" width="16" height="15"><use href="#nbg"/></svg><div class="a" style="left:993.0px;top:85.7px;width:9.5px;height:1.4px;background:#f6f6f6"></div><div class="a" style="left:1006.0px;top:85.7px;width:9.3px;height:1.4px;background:#f6f6f6"></div><div class="a" style="left:1019.8px;top:85.7px;width:18.2px;height:1.4px;background:#f6f6f6"></div><div class="a" style="left:1040.3px;top:85.7px;width:9.5px;height:1.4px;background:#f6f6f6"></div><div class="a" style="left:1051.8px;top:85.7px;width:9.8px;height:1.4px;background:#f6f6f6"></div><svg class="a" style="left:993px;top:76.7px" width="70" height="12"><path d="M9.8 10.3 L13.9 0.8 M22.6 10.3 L26.9 0.8" stroke="#f6f6f6" stroke-width="1.1"/><rect x="57" y="2.6" width="1.7" height="1.5" fill="#f6f6f6"/><rect x="57" y="6.6" width="1.7" height="1.5" fill="#f6f6f6"/></svg><svg class="a" style="left:1225px;top:69px" width="16" height="16"><use href="#minus"/></svg><svg class="a" style="left:1332px;top:69px" width="16" height="16"><use href="#thumb"/></svg><div class="t" style="left:1351.5px;top:74.84px;font-size:12px;color:#fff;letter-spacing:-0.647px;">Can Pay</div><div class="t" style="left:1429px;top:75.86px;font-size:10.8px;color:#fff;letter-spacing:-0.005px;">10/09/2023 23:59</div><svg class="a" style="left:1851px;top:69px" width="14" height="16"><use href="#pdfg"/></svg><div class="a" style="left:0;top:95.60px;width:1902px;height:30.8px;background:#555555"></div><svg class="a" style="left:133px;top:101px" width="16" height="16"><use href="#mag"/></svg><svg class="a" style="left:193px;top:100px" width="16" height="16"><use href="#doc"/></svg><div class="t" style="left:211.5px;top:106.18px;font-size:11.6px;color:#fff;">1</div><div class="t" style="left:245px;top:106.18px;font-size:11.6px;color:#fff;letter-spacing:-0.226px;">3.00</div><div class="t" style="left:354.5px;top:106.18px;font-size:11.6px;color:#fff;letter-spacing:-0.214px;">Euro</div><svg class="a" style="left:514px;top:100px" width="16" height="16"><use href="#minus"/></svg><div class="t" style="left:591.5px;top:106.86px;font-size:10.8px;color:#fff;letter-spacing:-0.068px;">25/07/2023 13:39</div><svg class="a" style="left:744px;top:102px" width="16" height="12"><use href="#env"/></svg><svg class="a" style="left:843px;top:100px" width="16" height="16"><circle cx="8" cy="8" r="8" fill="#eeec3a"/><use href="#chk"/></svg><svg class="a" style="left:936px;top:100px" width="16" height="15"><use href="#nby"/></svg><div class="a" style="left:993.0px;top:116.7px;width:9.5px;height:1.4px;background:#f6f6f6"></div><div class="a" style="left:1006.0px;top:116.7px;width:9.3px;height:1.4px;background:#f6f6f6"></div><div class="a" style="left:1019.8px;top:116.7px;width:18.2px;height:1.4px;background:#f6f6f6"></div><div class="a" style="left:1040.3px;top:116.7px;width:9.5px;height:1.4px;background:#f6f6f6"></div><div class="a" style="left:1051.8px;top:116.7px;width:9.8px;height:1.4px;background:#f6f6f6"></div><svg class="a" style="left:993px;top:107.7px" width="70" height="12"><path d="M9.8 10.3 L13.9 0.8 M22.6 10.3 L26.9 0.8" stroke="#f6f6f6" stroke-width="1.1"/><rect x="57" y="2.6" width="1.7" height="1.5" fill="#f6f6f6"/><rect x="57" y="6.6" width="1.7" height="1.5" fill="#f6f6f6"/></svg><svg class="a" style="left:1225px;top:100px" width="16" height="16"><use href="#minus"/></svg><svg class="a" style="left:1332px;top:100px" width="16" height="16"><use href="#thumb"/></svg><div class="t" style="left:1351.5px;top:105.84px;font-size:12px;color:#fff;letter-spacing:-0.647px;">Can Pay</div><div class="t" style="left:1429px;top:106.86px;font-size:10.8px;color:#fff;letter-spacing:-0.005px;">10/08/2023 23:59</div><svg class="a" style="left:1851px;top:100px" width="14" height="16"><use href="#pdfr"/></svg><div class="a" style="left:0;top:126.40px;width:1902px;height:30.8px;background:#4c4c4c"></div><div class="a" style="left:-10px;top:131px;width:102px;height:21px;border:1px dotted #e6e6e6;border-top:1px solid rgba(215,215,215,0.75);border-radius:0 5px 5px 0"></div><svg class="a" style="left:133px;top:132px" width="16" height="16"><use href="#mag"/></svg><svg class="a" style="left:193px;top:131px" width="16" height="16"><use href="#doc"/></svg><div class="t" style="left:211.5px;top:136.18px;font-size:11.6px;color:#fff;">1</div><div class="t" style="left:245px;top:136.18px;font-size:11.6px;color:#fff;letter-spacing:-0.237px;">810.33</div><div class="t" style="left:354.5px;top:136.18px;font-size:11.6px;color:#fff;letter-spacing:-0.214px;">Euro</div><svg class="a" style="left:514px;top:131px" width="16" height="16"><use href="#minus"/></svg><div class="t" style="left:591.5px;top:136.86px;font-size:10.8px;color:#fff;letter-spacing:-0.068px;">02/08/2023 18:57</div><svg class="a" style="left:744px;top:133px" width="16" height="12"><use href="#env"/></svg><svg class="a" style="left:843px;top:131px" width="16" height="16"><use href="#minus"/></svg><svg class="a" style="left:936px;top:131px" width="16" height="15"><use href="#nby"/></svg><div class="a" style="left:993.0px;top:146.7px;width:9.5px;height:1.4px;background:#f6f6f6"></div><div class="a" style="left:1006.0px;top:146.7px;width:9.3px;height:1.4px;background:#f6f6f6"></div><div class="a" style="left:1019.8px;top:146.7px;width:18.2px;height:1.4px;background:#f6f6f6"></div><div class="a" style="left:1040.3px;top:146.7px;width:9.5px;height:1.4px;background:#f6f6f6"></div><div class="a" style="left:1051.8px;top:146.7px;width:9.8px;height:1.4px;background:#f6f6f6"></div><svg class="a" style="left:993px;top:137.7px" width="70" height="12"><path d="M9.8 10.3 L13.9 0.8 M22.6 10.3 L26.9 0.8" stroke="#f6f6f6" stroke-width="1.1"/><rect x="57" y="2.6" width="1.7" height="1.5" fill="#f6f6f6"/><rect x="57" y="6.6" width="1.7" height="1.5" fill="#f6f6f6"/></svg><svg class="a" style="left:1225px;top:131px" width="16" height="16"><use href="#minus"/></svg><svg class="a" style="left:1332px;top:131px" width="16" height="16"><use href="#thumb"/></svg><div class="t" style="left:1351.5px;top:135.84px;font-size:12px;color:#fff;letter-spacing:-0.647px;">Can Pay</div><div class="t" style="left:1429px;top:136.86px;font-size:10.8px;color:#fff;letter-spacing:-0.005px;">29/07/2023 20:45</div><svg class="a" style="left:1851px;top:131px" width="14" height="16"><use href="#pdfr"/></svg><div class="a" style="left:0;top:157.20px;width:1902px;height:30.8px;background:#555555"></div><div class="a" style="left:-10px;top:162px;width:102px;height:21px;border:1px dotted #e6e6e6;border-top:1px solid rgba(215,215,215,0.75);border-radius:0 5px 5px 0"></div><svg class="a" style="left:133px;top:163px" width="16" height="16"><use href="#mag"/></svg><svg class="a" style="left:193px;top:162px" width="16" height="16"><use href="#doc"/></svg><div class="t" style="left:211.5px;top:167.18px;font-size:11.6px;color:#fff;">2</div><div class="t" style="left:245px;top:167.18px;font-size:11.6px;color:#fff;letter-spacing:-0.226px;">0.00</div><div class="t" style="left:354.5px;top:167.18px;font-size:11.6px;color:#fff;letter-spacing:-0.214px;">Euro</div><svg class="a" style="left:514px;top:162px" width="16" height="16"><use href="#minus"/></svg><div class="a" style="left:591.0px;top:177.7px;width:9.5px;height:1.4px;background:#f6f6f6"></div><div class="a" style="left:604.0px;top:177.7px;width:9.3px;height:1.4px;background:#f6f6f6"></div><div class="a" style="left:617.8px;top:177.7px;width:18.2px;height:1.4px;background:#f6f6f6"></div><div class="a" style="left:638.3px;top:177.7px;width:9.5px;height:1.4px;background:#f6f6f6"></div><div class="a" style="left:649.8px;top:177.7px;width:9.8px;height:1.4px;background:#f6f6f6"></div><svg class="a" style="left:591px;top:168.7px" width="70" height="12"><path d="M9.8 10.3 L13.9 0.8 M22.6 10.3 L26.9 0.8" stroke="#f6f6f6" stroke-width="1.1"/><rect x="57" y="2.6" width="1.7" height="1.5" fill="#f6f6f6"/><rect x="57" y="6.6" width="1.7" height="1.5" fill="#f6f6f6"/></svg><svg class="a" style="left:744px;top:164px" width="16" height="12"><use href="#env"/></svg><svg class="a" style="left:843px;top:162px" width="16" height="16"><use href="#minus"/></svg><svg class="a" style="left:936px;top:162px" width="16" height="15"><use href="#nbg"/></svg><div class="a" style="left:993.0px;top:177.7px;width:9.5px;height:1.4px;background:#f6f6f6"></div><div class="a" style="left:1006.0px;top:177.7px;width:9.3px;height:1.4px;background:#f6f6f6"></div><div class="a" style="left:1019.8px;top:177.7px;width:18.2px;height:1.4px;background:#f6f6f6"></div><div class="a" style="left:1040.3px;top:177.7px;width:9.5px;height:1.4px;background:#f6f6f6"></div><div class="a" style="left:1051.8px;top:177.7px;width:9.8px;height:1.4px;background:#f6f6f6"></div><svg class="a" style="left:993px;top:168.7px" width="70" height="12"><path d="M9.8 10.3 L13.9 0.8 M22.6 10.3 L26.9 0.8" stroke="#f6f6f6" stroke-width="1.1"/><rect x="57" y="2.6" width="1.7" height="1.5" fill="#f6f6f6"/><rect x="57" y="6.6" width="1.7" height="1.5" fill="#f6f6f6"/></svg><svg class="a" style="left:1225px;top:162px" width="16" height="16"><use href="#minus"/></svg><svg class="a" style="left:1332px;top:162px" width="16" height="16"><use href="#thumb"/></svg><div class="t" style="left:1351.5px;top:166.84px;font-size:12px;color:#fff;letter-spacing:-0.647px;">Can Pay</div><div class="t" style="left:1429px;top:167.86px;font-size:10.8px;color:#fff;letter-spacing:-0.005px;">29/07/2023 20:45</div><svg class="a" style="left:1851px;top:162px" width="14" height="16"><use href="#pdfr"/></svg><div class="a" style="left:0;top:188.00px;width:1902px;height:30.8px;background:#4c4c4c"></div><div class="a" style="left:-10px;top:193px;width:102px;height:21px;border:1px dotted #e6e6e6;border-top:1px solid rgba(215,215,215,0.75);border-radius:0 5px 5px 0"></div><svg class="a" style="left:133px;top:194px" width="16" height="16"><use href="#mag"/></svg><svg class="a" style="left:193px;top:193px" width="16" height="16"><use href="#doc"/></svg><div class="t" style="left:211.5px;top:198.18px;font-size:11.6px;color:#fff;">1</div><div class="t" style="left:245px;top:198.18px;font-size:11.6px;color:#fff;letter-spacing:-0.226px;">0.00</div><div class="t" style="left:354.5px;top:198.18px;font-size:11.6px;color:#fff;letter-spacing:-0.214px;">Euro</div><svg class="a" style="left:514px;top:193px" width="16" height="16"><use href="#minus"/></svg><div class="a" style="left:591.0px;top:208.7px;width:9.5px;height:1.4px;background:#f6f6f6"></div><div class="a" style="left:604.0px;top:208.7px;width:9.3px;height:1.4px;background:#f6f6f6"></div><div class="a" style="left:617.8px;top:208.7px;width:18.2px;height:1.4px;background:#f6f6f6"></div><div class="a" style="left:638.3px;top:208.7px;width:9.5px;height:1.4px;background:#f6f6f6"></div><div class="a" style="left:649.8px;top:208.7px;width:9.8px;height:1.4px;background:#f6f6f6"></div><svg class="a" style="left:591px;top:199.7px" width="70" height="12"><path d="M9.8 10.3 L13.9 0.8 M22.6 10.3 L26.9 0.8" stroke="#f6f6f6" stroke-width="1.1"/><rect x="57" y="2.6" width="1.7" height="1.5" fill="#f6f6f6"/><rect x="57" y="6.6" width="1.7" height="1.5" fill="#f6f6f6"/></svg><svg class="a" style="left:744px;top:195px" width="16" height="12"><use href="#env"/></svg><svg class="a" style="left:843px;top:193px" width="16" height="16"><use href="#minus"/></svg><svg class="a" style="left:936px;top:193px" width="16" height="15"><use href="#nbg"/></svg><div class="a" style="left:993.0px;top:208.7px;width:9.5px;height:1.4px;background:#f6f6f6"></div><div class="a" style="left:1006.0px;top:208.7px;width:9.3px;height:1.4px;background:#f6f6f6"></div><div class="a" style="left:1019.8px;top:208.7px;width:18.2px;height:1.4px;background:#f6f6f6"></div><div class="a" style="left:1040.3px;top:208.7px;width:9.5px;height:1.4px;background:#f6f6f6"></div><div class="a" style="left:1051.8px;top:208.7px;width:9.8px;height:1.4px;background:#f6f6f6"></div><svg class="a" style="left:993px;top:199.7px" width="70" height="12"><path d="M9.8 10.3 L13.9 0.8 M22.6 10.3 L26.9 0.8" stroke="#f6f6f6" stroke-width="1.1"/><rect x="57" y="2.6" width="1.7" height="1.5" fill="#f6f6f6"/><rect x="57" y="6.6" width="1.7" height="1.5" fill="#f6f6f6"/></svg><svg class="a" style="left:1225px;top:193px" width="16" height="16"><use href="#minus"/></svg><svg class="a" style="left:1332px;top:193px" width="16" height="16"><use href="#thumb"/></svg><div class="t" style="left:1351.5px;top:197.84px;font-size:12px;color:#fff;letter-spacing:-0.647px;">Can Pay</div><div class="t" style="left:1429px;top:198.86px;font-size:10.8px;color:#fff;letter-spacing:-0.005px;">29/07/2023 20:45</div><div class="t" style="left:1629px;top:197.18px;font-size:11.6px;color:#fff;letter-spacing:-0.051px;">Renato Barcelos</div><svg class="a" style="left:1851px;top:193px" width="14" height="16"><use href="#pdfr"/></svg><div class="a" style="left:0;top:218.80px;width:1902px;height:30.8px;background:#555555"></div><svg class="a" style="left:133px;top:224px" width="16" height="16"><use href="#mag"/></svg><svg class="a" style="left:193px;top:223px" width="16" height="16"><use href="#doc"/></svg><div class="t" style="left:211.5px;top:229.18px;font-size:11.6px;color:#fff;">1</div><div class="t" style="left:245px;top:229.18px;font-size:11.6px;color:#fff;letter-spacing:-0.237px;">810.33</div><div class="t" style="left:354.5px;top:229.18px;font-size:11.6px;color:#fff;letter-spacing:-0.214px;">Euro</div><svg class="a" style="left:514px;top:223px" width="16" height="16"><circle cx="8" cy="8" r="8" fill="#8dc03c"/><use href="#chk"/></svg><div class="t" style="left:591.5px;top:229.86px;font-size:10.8px;color:#fff;letter-spacing:-0.068px;">02/08/2023 18:53</div><svg class="a" style="left:744px;top:225px" width="16" height="12"><use href="#env"/></svg><svg class="a" style="left:843px;top:223px" width="16" height="16"><use href="#minus"/></svg><svg class="a" style="left:936px;top:223px" width="16" height="15"><use href="#nby"/></svg><div class="a" style="left:993.0px;top:239.7px;width:9.5px;height:1.4px;background:#f6f6f6"></div><div class="a" style="left:1006.0px;top:239.7px;width:9.3px;height:1.4px;background:#f6f6f6"></div><div class="a" style="left:1019.8px;top:239.7px;width:18.2px;height:1.4px;background:#f6f6f6"></div><div class="a" style="left:1040.3px;top:239.7px;width:9.5px;height:1.4px;background:#f6f6f6"></div><div class="a" style="left:1051.8px;top:239.7px;width:9.8px;height:1.4px;background:#f6f6f6"></div><svg class="a" style="left:993px;top:230.7px" width="70" height="12"><path d="M9.8 10.3 L13.9 0.8 M22.6 10.3 L26.9 0.8" stroke="#f6f6f6" stroke-width="1.1"/><rect x="57" y="2.6" width="1.7" height="1.5" fill="#f6f6f6"/><rect x="57" y="6.6" width="1.7" height="1.5" fill="#f6f6f6"/></svg><svg class="a" style="left:1225px;top:223px" width="16" height="16"><use href="#minus"/></svg><svg class="a" style="left:1332px;top:223px" width="16" height="16"><use href="#thumb"/></svg><div class="t" style="left:1351.5px;top:228.84px;font-size:12px;color:#fff;letter-spacing:-0.647px;">Can Pay</div><div class="t" style="left:1429px;top:229.86px;font-size:10.8px;color:#fff;letter-spacing:-0.005px;">29/07/2023 20:45</div><svg class="a" style="left:1851px;top:223px" width="14" height="16"><use href="#pdfr"/></svg><div class="a" style="left:0;top:249.60px;width:1902px;height:30.8px;background:#4c4c4c"></div><div class="a" style="left:-10px;top:254px;width:102px;height:21px;border:1px dotted #e6e6e6;border-top:1px solid rgba(215,215,215,0.75);border-radius:0 5px 5px 0"></div><svg class="a" style="left:133px;top:255px" width="16" height="16"><use href="#mag"/></svg><svg class="a" style="left:193px;top:254px" width="16" height="16"><use href="#doc"/></svg><div class="t" style="left:211.5px;top:260.18px;font-size:11.6px;color:#fff;">3</div><div class="t" style="left:245px;top:260.18px;font-size:11.6px;color:#fff;letter-spacing:-0.225px;">11.00</div><div class="t" style="left:354.5px;top:260.18px;font-size:11.6px;color:#fff;letter-spacing:-0.214px;">Euro</div><svg class="a" style="left:514px;top:254px" width="16" height="16"><use href="#minus"/></svg><div class="a" style="left:591.0px;top:270.7px;width:9.5px;height:1.4px;background:#f6f6f6"></div><div class="a" style="left:604.0px;top:270.7px;width:9.3px;height:1.4px;background:#f6f6f6"></div><div class="a" style="left:617.8px;top:270.7px;width:18.2px;height:1.4px;background:#f6f6f6"></div><div class="a" style="left:638.3px;top:270.7px;width:9.5px;height:1.4px;background:#f6f6f6"></div><div class="a" style="left:649.8px;top:270.7px;width:9.8px;height:1.4px;background:#f6f6f6"></div><svg class="a" style="left:591px;top:261.7px" width="70" height="12"><path d="M9.8 10.3 L13.9 0.8 M22.6 10.3 L26.9 0.8" stroke="#f6f6f6" stroke-width="1.1"/><rect x="57" y="2.6" width="1.7" height="1.5" fill="#f6f6f6"/><rect x="57" y="6.6" width="1.7" height="1.5" fill="#f6f6f6"/></svg><svg class="a" style="left:744px;top:256px" width="16" height="12"><use href="#env"/></svg><svg class="a" style="left:843px;top:254px" width="16" height="16"><use href="#minus"/></svg><svg class="a" style="left:936px;top:254px" width="16" height="15"><use href="#nby"/></svg><div class="a" style="left:993.0px;top:270.7px;width:9.5px;height:1.4px;background:#f6f6f6"></div><div class="a" style="left:1006.0px;top:270.7px;width:9.3px;height:1.4px;background:#f6f6f6"></div><div class="a" style="left:1019.8px;top:270.7px;width:18.2px;height:1.4px;background:#f6f6f6"></div><div class="a" style="left:1040.3px;top:270.7px;width:9.5px;height:1.4px;background:#f6f6f6"></div><div class="a" style="left:1051.8px;top:270.7px;width:9.8px;height:1.4px;background:#f6f6f6"></div><svg class="a" style="left:993px;top:261.7px" width="70" height="12"><path d="M9.8 10.3 L13.9 0.8 M22.6 10.3 L26.9 0.8" stroke="#f6f6f6" stroke-width="1.1"/><rect x="57" y="2.6" width="1.7" height="1.5" fill="#f6f6f6"/><rect x="57" y="6.6" width="1.7" height="1.5" fill="#f6f6f6"/></svg><svg class="a" style="left:1225px;top:254px" width="16" height="16"><use href="#minus"/></svg><svg class="a" style="left:1332px;top:254px" width="16" height="16"><use href="#thumb"/></svg><div class="t" style="left:1351.5px;top:259.84px;font-size:12px;color:#fff;letter-spacing:-0.647px;">Can Pay</div><div class="t" style="left:1429px;top:260.86px;font-size:10.8px;color:#fff;letter-spacing:-0.005px;">29/07/2023 20:45</div><div class="t" style="left:1629px;top:259.18px;font-size:11.6px;color:#fff;letter-spacing:-0.051px;">Renato Barcelos</div><svg class="a" style="left:1851px;top:254px" width="14" height="16"><use href="#pdfr"/></svg><div class="a" style="left:0;top:280.40px;width:1902px;height:30.8px;background:#555555"></div><div class="a" style="left:-10px;top:285px;width:102px;height:21px;border:1px dotted #e6e6e6;border-top:1px solid rgba(215,215,215,0.75);border-radius:0 5px 5px 0"></div><svg class="a" style="left:133px;top:286px" width="16" height="16"><use href="#mag"/></svg><svg class="a" style="left:193px;top:285px" width="16" height="16"><use href="#doc"/></svg><div class="t" style="left:211.5px;top:290.18px;font-size:11.6px;color:#fff;">3</div><div class="t" style="left:245px;top:290.18px;font-size:11.6px;color:#fff;letter-spacing:-0.229px;">10,260.00</div><div class="t" style="left:354.5px;top:290.18px;font-size:11.6px;color:#fff;letter-spacing:-0.214px;">Euro</div><svg class="a" style="left:514px;top:285px" width="16" height="16"><use href="#minus"/></svg><div class="a" style="left:591.0px;top:300.7px;width:9.5px;height:1.4px;background:#f6f6f6"></div><div class="a" style="left:604.0px;top:300.7px;width:9.3px;height:1.4px;background:#f6f6f6"></div><div class="a" style="left:617.8px;top:300.7px;width:18.2px;height:1.4px;background:#f6f6f6"></div><div class="a" style="left:638.3px;top:300.7px;width:9.5px;height:1.4px;background:#f6f6f6"></div><div class="a" style="left:649.8px;top:300.7px;width:9.8px;height:1.4px;background:#f6f6f6"></div><svg class="a" style="left:591px;top:291.7px" width="70" height="12"><path d="M9.8 10.3 L13.9 0.8 M22.6 10.3 L26.9 0.8" stroke="#f6f6f6" stroke-width="1.1"/><rect x="57" y="2.6" width="1.7" height="1.5" fill="#f6f6f6"/><rect x="57" y="6.6" width="1.7" height="1.5" fill="#f6f6f6"/></svg><svg class="a" style="left:744px;top:287px" width="16" height="12"><use href="#env"/></svg><svg class="a" style="left:843px;top:285px" width="16" height="16"><circle cx="8" cy="8" r="8" fill="#f39a32"/><use href="#chk"/></svg><svg class="a" style="left:936px;top:285px" width="16" height="15"><use href="#nby"/></svg><div class="a" style="left:993.0px;top:300.7px;width:9.5px;height:1.4px;background:#f6f6f6"></div><div class="a" style="left:1006.0px;top:300.7px;width:9.3px;height:1.4px;background:#f6f6f6"></div><div class="a" style="left:1019.8px;top:300.7px;width:18.2px;height:1.4px;background:#f6f6f6"></div><div class="a" style="left:1040.3px;top:300.7px;width:9.5px;height:1.4px;background:#f6f6f6"></div><div class="a" style="left:1051.8px;top:300.7px;width:9.8px;height:1.4px;background:#f6f6f6"></div><svg class="a" style="left:993px;top:291.7px" width="70" height="12"><path d="M9.8 10.3 L13.9 0.8 M22.6 10.3 L26.9 0.8" stroke="#f6f6f6" stroke-width="1.1"/><rect x="57" y="2.6" width="1.7" height="1.5" fill="#f6f6f6"/><rect x="57" y="6.6" width="1.7" height="1.5" fill="#f6f6f6"/></svg><svg class="a" style="left:1225px;top:285px" width="16" height="16"><use href="#minus"/></svg><svg class="a" style="left:1332px;top:285px" width="16" height="16"><use href="#thumb"/></svg><div class="t" style="left:1351.5px;top:289.84px;font-size:12px;color:#fff;letter-spacing:-0.647px;">Can Pay</div><div class="t" style="left:1429px;top:290.86px;font-size:10.8px;color:#fff;letter-spacing:-0.005px;">29/07/2023 20:45</div><svg class="a" style="left:1851px;top:285px" width="14" height="16"><use href="#pdfr"/></svg><div class="a" style="left:0;top:311.20px;width:1902px;height:30.8px;background:#4c4c4c"></div><div class="a" style="left:-10px;top:316px;width:102px;height:21px;border:1px dotted #e6e6e6;border-top:1px solid rgba(215,215,215,0.75);border-radius:0 5px 5px 0"></div><div class="t" style="left:0px;top:321.18px;font-size:11.6px;color:#fff;letter-spacing:-0.309px;">aeli Sheqel</div><svg class="a" style="left:133px;top:317px" width="16" height="16"><use href="#mag"/></svg><svg class="a" style="left:193px;top:316px" width="16" height="16"><use href="#doc"/></svg><div class="t" style="left:211.5px;top:321.18px;font-size:11.6px;color:#fff;">1</div><div class="t" style="left:245px;top:321.18px;font-size:11.6px;color:#fff;letter-spacing:-0.226px;">0.00</div><div class="t" style="left:354.5px;top:321.18px;font-size:11.6px;color:#fff;letter-spacing:0.016px;">New Israeli Sheqel</div><svg class="a" style="left:514px;top:316px" width="16" height="16"><use href="#minus"/></svg><div class="t" style="left:591.5px;top:321.86px;font-size:10.8px;color:#fff;letter-spacing:-0.068px;">20/07/2023 14:06</div><svg class="a" style="left:744px;top:318px" width="16" height="12"><use href="#env"/></svg><svg class="a" style="left:843px;top:316px" width="16" height="16"><use href="#minus"/></svg><svg class="a" style="left:936px;top:316px" width="16" height="15"><use href="#nby"/></svg><div class="a" style="left:993.0px;top:331.7px;width:9.5px;height:1.4px;background:#f6f6f6"></div><div class="a" style="left:1006.0px;top:331.7px;width:9.3px;height:1.4px;background:#f6f6f6"></div><div class="a" style="left:1019.8px;top:331.7px;width:18.2px;height:1.4px;background:#f6f6f6"></div><div class="a" style="left:1040.3px;top:331.7px;width:9.5px;height:1.4px;background:#f6f6f6"></div><div class="a" style="left:1051.8px;top:331.7px;width:9.8px;height:1.4px;background:#f6f6f6"></div><svg class="a" style="left:993px;top:322.7px" width="70" height="12"><path d="M9.8 10.3 L13.9 0.8 M22.6 10.3 L26.9 0.8" stroke="#f6f6f6" stroke-width="1.1"/><rect x="57" y="2.6" width="1.7" height="1.5" fill="#f6f6f6"/><rect x="57" y="6.6" width="1.7" height="1.5" fill="#f6f6f6"/></svg><svg class="a" style="left:1225px;top:316px" width="16" height="16"><use href="#minus"/></svg><svg class="a" style="left:1332px;top:316px" width="16" height="16"><use href="#thumb"/></svg><div class="t" style="left:1351.5px;top:320.84px;font-size:12px;color:#fff;letter-spacing:-0.647px;">Can Pay</div><div class="t" style="left:1429px;top:321.86px;font-size:10.8px;color:#fff;letter-spacing:-0.005px;">10/08/2023 23:59</div><svg class="a" style="left:1851px;top:316px" width="14" height="16"><use href="#pdfg"/></svg><div class="a" style="left:0;top:342.00px;width:1902px;height:30.8px;background:#555555"></div><svg class="a" style="left:133px;top:348px" width="16" height="16"><use href="#mag"/></svg><svg class="a" style="left:193px;top:347px" width="16" height="16"><use href="#doc"/></svg><div class="t" style="left:211.5px;top:352.18px;font-size:11.6px;color:#fff;">2</div><div class="t" style="left:245px;top:352.18px;font-size:11.6px;color:#fff;letter-spacing:-0.232px;">80.00</div><div class="t" style="left:354.5px;top:352.18px;font-size:11.6px;color:#fff;letter-spacing:-0.214px;">Euro</div><svg class="a" style="left:514px;top:347px" width="16" height="16"><circle cx="8" cy="8" r="8" fill="#8dc03c"/><use href="#chk"/></svg><div class="t" style="left:591.5px;top:352.86px;font-size:10.8px;color:#fff;letter-spacing:-0.068px;">13/07/2023 13:28</div><svg class="a" style="left:744px;top:348px" width="16" height="14"><use href="#envr"/></svg><svg class="a" style="left:843px;top:347px" width="16" height="16"><use href="#minus"/></svg><svg class="a" style="left:936px;top:347px" width="16" height="15"><use href="#nby"/></svg><div class="a" style="left:993.0px;top:362.7px;width:9.5px;height:1.4px;background:#f6f6f6"></div><div class="a" style="left:1006.0px;top:362.7px;width:9.3px;height:1.4px;background:#f6f6f6"></div><div class="a" style="left:1019.8px;top:362.7px;width:18.2px;height:1.4px;background:#f6f6f6"></div><div class="a" style="left:1040.3px;top:362.7px;width:9.5px;height:1.4px;background:#f6f6f6"></div><div class="a" style="left:1051.8px;top:362.7px;width:9.8px;height:1.4px;background:#f6f6f6"></div><svg class="a" style="left:993px;top:353.7px" width="70" height="12"><path d="M9.8 10.3 L13.9 0.8 M22.6 10.3 L26.9 0.8" stroke="#f6f6f6" stroke-width="1.1"/><rect x="57" y="2.6" width="1.7" height="1.5" fill="#f6f6f6"/><rect x="57" y="6.6" width="1.7" height="1.5" fill="#f6f6f6"/></svg><svg class="a" style="left:1225px;top:347px" width="16" height="16"><use href="#minus"/></svg><svg class="a" style="left:1332px;top:347px" width="16" height="16"><use href="#thumb"/></svg><div class="t" style="left:1351.5px;top:351.84px;font-size:12px;color:#fff;letter-spacing:-0.647px;">Can Pay</div><div class="t" style="left:1429px;top:352.86px;font-size:10.8px;color:#fff;letter-spacing:-0.005px;">10/08/2023 23:59</div><svg class="a" style="left:1851px;top:347px" width="14" height="16"><use href="#pdfg"/></svg><div class="a" style="left:0;top:372.80px;width:1902px;height:30.8px;background:#4c4c4c"></div><svg class="a" style="left:133px;top:378px" width="16" height="16"><use href="#mag"/></svg><svg class="a" style="left:193px;top:377px" width="16" height="16"><use href="#doc"/></svg><div class="t" style="left:211.5px;top:383.18px;font-size:11.6px;color:#fff;">2</div><div class="t" style="left:245px;top:383.18px;font-size:11.6px;color:#fff;letter-spacing:-0.232px;">30.00</div><div class="t" style="left:354.5px;top:383.18px;font-size:11.6px;color:#fff;letter-spacing:-0.214px;">Euro</div><svg class="a" style="left:514px;top:377px" width="16" height="16"><circle cx="8" cy="8" r="8" fill="#8dc03c"/><use href="#chk"/></svg><div class="t" style="left:591.5px;top:383.86px;font-size:10.8px;color:#fff;letter-spacing:-0.068px;">13/07/2023 12:56</div><svg class="a" style="left:744px;top:378px" width="16" height="14"><use href="#envr"/></svg><svg class="a" style="left:843px;top:377px" width="16" height="16"><use href="#minus"/></svg><svg class="a" style="left:936px;top:377px" width="16" height="15"><use href="#nby"/></svg><div class="a" style="left:993.0px;top:393.7px;width:9.5px;height:1.4px;background:#f6f6f6"></div><div class="a" style="left:1006.0px;top:393.7px;width:9.3px;height:1.4px;background:#f6f6f6"></div><div class="a" style="left:1019.8px;top:393.7px;width:18.2px;height:1.4px;background:#f6f6f6"></div><div class="a" style="left:1040.3px;top:393.7px;width:9.5px;height:1.4px;background:#f6f6f6"></div><div class="a" style="left:1051.8px;top:393.7px;width:9.8px;height:1.4px;background:#f6f6f6"></div><svg class="a" style="left:993px;top:384.7px" width="70" height="12"><path d="M9.8 10.3 L13.9 0.8 M22.6 10.3 L26.9 0.8" stroke="#f6f6f6" stroke-width="1.1"/><rect x="57" y="2.6" width="1.7" height="1.5" fill="#f6f6f6"/><rect x="57" y="6.6" width="1.7" height="1.5" fill="#f6f6f6"/></svg><svg class="a" style="left:1225px;top:377px" width="16" height="16"><use href="#minus"/></svg><svg class="a" style="left:1332px;top:377px" width="16" height="16"><use href="#thumb"/></svg><div class="t" style="left:1351.5px;top:382.84px;font-size:12px;color:#fff;letter-spacing:-0.647px;">Can Pay</div><div class="t" style="left:1429px;top:383.86px;font-size:10.8px;color:#fff;letter-spacing:-0.005px;">10/08/2023 23:59</div><svg class="a" style="left:1851px;top:377px" width="14" height="16"><use href="#pdfg"/></svg><div class="a" style="left:0;top:403.60px;width:1902px;height:30.8px;background:#555555"></div><div class="t" style="left:0px;top:414.18px;font-size:11.6px;color:#fff;letter-spacing:-0.195px;">eli Sheqel</div><svg class="a" style="left:133px;top:409px" width="16" height="16"><use href="#mag"/></svg><svg class="a" style="left:193px;top:408px" width="16" height="16"><use href="#doc"/></svg><div class="t" style="left:211.5px;top:414.18px;font-size:11.6px;color:#fff;">1</div><div class="t" style="left:245px;top:414.18px;font-size:11.6px;color:#fff;letter-spacing:-0.226px;">0.00</div><div class="t" style="left:354.5px;top:414.18px;font-size:11.6px;color:#fff;letter-spacing:0.016px;">New Israeli Sheqel</div><svg class="a" style="left:514px;top:408px" width="16" height="16"><circle cx="8" cy="8" r="8" fill="#8dc03c"/><use href="#chk"/></svg><div class="t" style="left:591.5px;top:414.86px;font-size:10.8px;color:#fff;letter-spacing:-0.068px;">13/07/2023 12:57</div><svg class="a" style="left:744px;top:409px" width="16" height="14"><use href="#envr"/></svg><svg class="a" style="left:843px;top:408px" width="16" height="16"><use href="#minus"/></svg><svg class="a" style="left:936px;top:408px" width="16" height="15"><use href="#nbg"/></svg><div class="a" style="left:993.0px;top:424.7px;width:9.5px;height:1.4px;background:#f6f6f6"></div><div class="a" style="left:1006.0px;top:424.7px;width:9.3px;height:1.4px;background:#f6f6f6"></div><div class="a" style="left:1019.8px;top:424.7px;width:18.2px;height:1.4px;background:#f6f6f6"></div><div class="a" style="left:1040.3px;top:424.7px;width:9.5px;height:1.4px;background:#f6f6f6"></div><div class="a" style="left:1051.8px;top:424.7px;width:9.8px;height:1.4px;background:#f6f6f6"></div><svg class="a" style="left:993px;top:415.7px" width="70" height="12"><path d="M9.8 10.3 L13.9 0.8 M22.6 10.3 L26.9 0.8" stroke="#f6f6f6" stroke-width="1.1"/><rect x="57" y="2.6" width="1.7" height="1.5" fill="#f6f6f6"/><rect x="57" y="6.6" width="1.7" height="1.5" fill="#f6f6f6"/></svg><svg class="a" style="left:1225px;top:408px" width="16" height="16"><use href="#minus"/></svg><svg class="a" style="left:1332px;top:408px" width="16" height="16"><use href="#thumb"/></svg><div class="t" style="left:1351.5px;top:413.84px;font-size:12px;color:#fff;letter-spacing:-0.647px;">Can Pay</div><div class="t" style="left:1429px;top:414.86px;font-size:10.8px;color:#fff;letter-spacing:-0.005px;">10/08/2023 23:59</div><svg class="a" style="left:1851px;top:408px" width="14" height="16"><use href="#pdfg"/></svg><div class="a" style="left:0;top:434.40px;width:1902px;height:30.8px;background:#4c4c4c"></div><svg class="a" style="left:133px;top:440px" width="16" height="16"><use href="#mag"/></svg><svg class="a" style="left:193px;top:439px" width="16" height="16"><use href="#doc"/></svg><div class="t" style="left:211.5px;top:444.18px;font-size:11.6px;color:#fff;">3</div><div class="t" style="left:245px;top:444.18px;font-size:11.6px;color:#fff;letter-spacing:-0.226px;">5,130.00</div><div class="t" style="left:354.5px;top:444.18px;font-size:11.6px;color:#fff;letter-spacing:-0.214px;">Euro</div><svg class="a" style="left:514px;top:439px" width="16" height="16"><circle cx="8" cy="8" r="8" fill="#8dc03c"/><use href="#chk"/></svg><div class="t" style="left:591.5px;top:444.86px;font-size:10.8px;color:#fff;letter-spacing:-0.068px;">12/07/2023 19:42</div><svg class="a" style="left:744px;top:440px" width="16" height="14"><use href="#envr"/></svg><svg class="a" style="left:843px;top:439px" width="16" height="16"><use href="#minus"/></svg><svg class="a" style="left:936px;top:439px" width="16" height="15"><use href="#nbg"/></svg><div class="a" style="left:993.0px;top:454.7px;width:9.5px;height:1.4px;background:#f6f6f6"></div><div class="a" style="left:1006.0px;top:454.7px;width:9.3px;height:1.4px;background:#f6f6f6"></div><div class="a" style="left:1019.8px;top:454.7px;width:18.2px;height:1.4px;background:#f6f6f6"></div><div class="a" style="left:1040.3px;top:454.7px;width:9.5px;height:1.4px;background:#f6f6f6"></div><div class="a" style="left:1051.8px;top:454.7px;width:9.8px;height:1.4px;background:#f6f6f6"></div><svg class="a" style="left:993px;top:445.7px" width="70" height="12"><path d="M9.8 10.3 L13.9 0.8 M22.6 10.3 L26.9 0.8" stroke="#f6f6f6" stroke-width="1.1"/><rect x="57" y="2.6" width="1.7" height="1.5" fill="#f6f6f6"/><rect x="57" y="6.6" width="1.7" height="1.5" fill="#f6f6f6"/></svg><svg class="a" style="left:1225px;top:439px" width="16" height="16"><use href="#minus"/></svg><svg class="a" style="left:1332px;top:439px" width="16" height="16"><use href="#thumb"/></svg><div class="t" style="left:1351.5px;top:443.84px;font-size:12px;color:#fff;letter-spacing:-0.647px;">Can Pay</div><div class="t" style="left:1429px;top:444.86px;font-size:10.8px;color:#fff;letter-spacing:-0.005px;">10/08/2023 23:59</div><svg class="a" style="left:1851px;top:439px" width="14" height="16"><use href="#pdfg"/></svg><div class="a" style="left:0;top:465.20px;width:1902px;height:30.8px;background:#555555"></div><svg class="a" style="left:133px;top:471px" width="16" height="16"><use href="#mag"/></svg><svg class="a" style="left:193px;top:470px" width="16" height="16"><use href="#doc"/></svg><div class="t" style="left:211.5px;top:475.18px;font-size:11.6px;color:#fff;">1</div><div class="t" style="left:245px;top:475.18px;font-size:11.6px;color:#fff;letter-spacing:-0.226px;">3,390.00</div><div class="t" style="left:354.5px;top:475.18px;font-size:11.6px;color:#fff;letter-spacing:-0.214px;">Euro</div><svg class="a" style="left:514px;top:470px" width="16" height="16"><circle cx="8" cy="8" r="8" fill="#8dc03c"/><use href="#chk"/></svg><div class="t" style="left:591.5px;top:475.86px;font-size:10.8px;color:#fff;letter-spacing:-0.068px;">10/07/2023 14:08</div><svg class="a" style="left:744px;top:471px" width="16" height="14"><use href="#envr"/></svg><svg class="a" style="left:843px;top:470px" width="16" height="16"><circle cx="8" cy="8" r="8" fill="#2a55c4"/><use href="#chk"/></svg><svg class="a" style="left:936px;top:470px" width="16" height="15"><use href="#nby"/></svg><div class="a" style="left:993.0px;top:485.7px;width:9.5px;height:1.4px;background:#f6f6f6"></div><div class="a" style="left:1006.0px;top:485.7px;width:9.3px;height:1.4px;background:#f6f6f6"></div><div class="a" style="left:1019.8px;top:485.7px;width:18.2px;height:1.4px;background:#f6f6f6"></div><div class="a" style="left:1040.3px;top:485.7px;width:9.5px;height:1.4px;background:#f6f6f6"></div><div class="a" style="left:1051.8px;top:485.7px;width:9.8px;height:1.4px;background:#f6f6f6"></div><svg class="a" style="left:993px;top:476.7px" width="70" height="12"><path d="M9.8 10.3 L13.9 0.8 M22.6 10.3 L26.9 0.8" stroke="#f6f6f6" stroke-width="1.1"/><rect x="57" y="2.6" width="1.7" height="1.5" fill="#f6f6f6"/><rect x="57" y="6.6" width="1.7" height="1.5" fill="#f6f6f6"/></svg><svg class="a" style="left:1225px;top:470px" width="16" height="16"><use href="#minus"/></svg><svg class="a" style="left:1332px;top:470px" width="16" height="16"><use href="#thumb"/></svg><div class="t" style="left:1351.5px;top:474.84px;font-size:12px;color:#fff;letter-spacing:-0.647px;">Can Pay</div><div class="t" style="left:1429px;top:475.86px;font-size:10.8px;color:#fff;letter-spacing:-0.005px;">10/08/2023 23:59</div><svg class="a" style="left:1851px;top:470px" width="14" height="16"><use href="#pdfg"/></svg><div class="a" style="left:0;top:496.00px;width:1902px;height:30.8px;background:#4c4c4c"></div><svg class="a" style="left:133px;top:502px" width="16" height="16"><use href="#mag"/></svg><svg class="a" style="left:193px;top:501px" width="16" height="16"><use href="#doc"/></svg><div class="t" style="left:211.5px;top:506.18px;font-size:11.6px;color:#fff;">1</div><div class="t" style="left:245px;top:506.18px;font-size:11.6px;color:#fff;letter-spacing:-0.226px;">6,528.00</div><div class="t" style="left:354.5px;top:506.18px;font-size:11.6px;color:#fff;letter-spacing:-0.214px;">Euro</div><svg class="a" style="left:514px;top:501px" width="16" height="16"><circle cx="8" cy="8" r="8" fill="#8dc03c"/><use href="#chk"/></svg><div class="t" style="left:591.5px;top:506.86px;font-size:10.8px;color:#fff;letter-spacing:-0.068px;">10/07/2023 14:08</div><svg class="a" style="left:744px;top:502px" width="16" height="14"><use href="#envr"/></svg><svg class="a" style="left:843px;top:501px" width="16" height="16"><circle cx="8" cy="8" r="8" fill="#2a55c4"/><use href="#chk"/></svg><svg class="a" style="left:936px;top:501px" width="16" height="15"><use href="#nby"/></svg><div class="a" style="left:993.0px;top:516.7px;width:9.5px;height:1.4px;background:#f6f6f6"></div><div class="a" style="left:1006.0px;top:516.7px;width:9.3px;height:1.4px;background:#f6f6f6"></div><div class="a" style="left:1019.8px;top:516.7px;width:18.2px;height:1.4px;background:#f6f6f6"></div><div class="a" style="left:1040.3px;top:516.7px;width:9.5px;height:1.4px;background:#f6f6f6"></div><div class="a" style="left:1051.8px;top:516.7px;width:9.8px;height:1.4px;background:#f6f6f6"></div><svg class="a" style="left:993px;top:507.7px" width="70" height="12"><path d="M9.8 10.3 L13.9 0.8 M22.6 10.3 L26.9 0.8" stroke="#f6f6f6" stroke-width="1.1"/><rect x="57" y="2.6" width="1.7" height="1.5" fill="#f6f6f6"/><rect x="57" y="6.6" width="1.7" height="1.5" fill="#f6f6f6"/></svg><svg class="a" style="left:1225px;top:501px" width="16" height="16"><use href="#minus"/></svg><svg class="a" style="left:1332px;top:501px" width="16" height="16"><use href="#thumb"/></svg><div class="t" style="left:1351.5px;top:505.84px;font-size:12px;color:#fff;letter-spacing:-0.647px;">Can Pay</div><div class="t" style="left:1429px;top:506.86px;font-size:10.8px;color:#fff;letter-spacing:-0.005px;">10/08/2023 23:59</div><svg class="a" style="left:1851px;top:501px" width="14" height="16"><use href="#pdfr"/></svg><div class="a" style="left:0;top:526.80px;width:1902px;height:30.8px;background:#555555"></div><svg class="a" style="left:133px;top:532px" width="16" height="16"><use href="#mag"/></svg><svg class="a" style="left:193px;top:531px" width="16" height="16"><use href="#doc"/></svg><div class="t" style="left:211.5px;top:537.18px;font-size:11.6px;color:#fff;">1</div><div class="t" style="left:245px;top:537.18px;font-size:11.6px;color:#fff;letter-spacing:-0.232px;">12.00</div><div class="t" style="left:354.5px;top:537.18px;font-size:11.6px;color:#fff;letter-spacing:-0.214px;">Euro</div><svg class="a" style="left:514px;top:531px" width="16" height="16"><circle cx="8" cy="8" r="8" fill="#8dc03c"/><use href="#chk"/></svg><div class="t" style="left:591.5px;top:537.86px;font-size:10.8px;color:#fff;letter-spacing:-0.068px;">10/07/2023 14:08</div><svg class="a" style="left:744px;top:533px" width="16" height="12"><use href="#env"/></svg><svg class="a" style="left:843px;top:531px" width="16" height="16"><circle cx="8" cy="8" r="8" fill="#8dc03c"/><use href="#chk"/></svg><svg class="a" style="left:936px;top:531px" width="16" height="15"><use href="#nby"/></svg><div class="t" style="left:993px;top:537.86px;font-size:10.8px;color:#fff;letter-spacing:-0.068px;">12/07/2023 18:36</div><svg class="a" style="left:1225px;top:531px" width="16" height="16"><use href="#minus"/></svg><svg class="a" style="left:1332px;top:531px" width="16" height="16"><use href="#thumb"/></svg><div class="t" style="left:1351.5px;top:536.84px;font-size:12px;color:#fff;letter-spacing:-0.647px;">Can Pay</div><div class="t" style="left:1429px;top:537.86px;font-size:10.8px;color:#fff;letter-spacing:-0.005px;">10/08/2023 23:59</div><div class="t" style="left:1629px;top:536.18px;font-size:11.6px;color:#fff;letter-spacing:-0.051px;">Renato Barcelos</div><svg class="a" style="left:1851px;top:531px" width="14" height="16"><use href="#pdfr"/></svg><div class="a" style="left:0;top:557.60px;width:1902px;height:30.8px;background:#4c4c4c"></div><svg class="a" style="left:133px;top:563px" width="16" height="16"><use href="#mag"/></svg><svg class="a" style="left:193px;top:562px" width="16" height="16"><use href="#doc"/></svg><div class="t" style="left:211.5px;top:568.18px;font-size:11.6px;color:#fff;">1</div><div class="t" style="left:245px;top:568.18px;font-size:11.6px;color:#fff;letter-spacing:-0.225px;">11.00</div><div class="t" style="left:354.5px;top:568.18px;font-size:11.6px;color:#fff;letter-spacing:-0.214px;">Euro</div><svg class="a" style="left:514px;top:562px" width="16" height="16"><circle cx="8" cy="8" r="8" fill="#8dc03c"/><use href="#chk"/></svg><div class="t" style="left:591.5px;top:568.86px;font-size:10.8px;color:#fff;letter-spacing:-0.068px;">10/07/2023 14:08</div><svg class="a" style="left:744px;top:564px" width="16" height="12"><use href="#env"/></svg><svg class="a" style="left:843px;top:562px" width="16" height="16"><circle cx="8" cy="8" r="8" fill="#8dc03c"/><use href="#chk"/></svg><svg class="a" style="left:936px;top:562px" width="16" height="15"><use href="#nbg"/></svg><div class="t" style="left:993px;top:568.86px;font-size:10.8px;color:#fff;letter-spacing:-0.068px;">10/07/2023 14:08</div><svg class="a" style="left:1225px;top:562px" width="16" height="16"><use href="#minus"/></svg><svg class="a" style="left:1332px;top:562px" width="16" height="16"><use href="#thumb"/></svg><div class="t" style="left:1351.5px;top:567.84px;font-size:12px;color:#fff;letter-spacing:-0.647px;">Can Pay</div><div class="t" style="left:1429px;top:568.86px;font-size:10.8px;color:#fff;letter-spacing:-0.005px;">10/08/2023 23:59</div><div class="t" style="left:1629px;top:567.18px;font-size:11.6px;color:#fff;letter-spacing:-0.051px;">Renato Barcelos</div><svg class="a" style="left:1851px;top:562px" width="14" height="16"><use href="#pdfr"/></svg><div class="a" style="left:0;top:588.40px;width:1902px;height:30.8px;background:#555555"></div><div class="t" style="left:0px;top:598.18px;font-size:11.6px;color:#fff;letter-spacing:-0.195px;">eli Sheqel</div><svg class="a" style="left:133px;top:594px" width="16" height="16"><use href="#mag"/></svg><svg class="a" style="left:193px;top:593px" width="16" height="16"><use href="#doc"/></svg><div class="t" style="left:211.5px;top:598.18px;font-size:11.6px;color:#fff;">1</div><div class="t" style="left:250px;top:598.18px;font-size:11.6px;color:#fff;letter-spacing:-0.232px;">10.00</div><div class="t" style="left:354.5px;top:598.18px;font-size:11.6px;color:#fff;letter-spacing:0.016px;">New Israeli Sheqel</div><svg class="a" style="left:514px;top:593px" width="16" height="16"><circle cx="8" cy="8" r="8" fill="#8dc03c"/><use href="#chk"/></svg><div class="t" style="left:591.5px;top:598.86px;font-size:10.8px;color:#fff;letter-spacing:-0.068px;">10/07/2023 14:02</div><svg class="a" style="left:744px;top:595px" width="16" height="12"><use href="#env"/></svg><svg class="a" style="left:843px;top:593px" width="16" height="16"><circle cx="8" cy="8" r="8" fill="#8dc03c"/><use href="#chk"/></svg><svg class="a" style="left:936px;top:593px" width="16" height="15"><use href="#nbg"/></svg><div class="t" style="left:993px;top:598.86px;font-size:10.8px;color:#fff;letter-spacing:-0.068px;">10/07/2023 14:02</div><svg class="a" style="left:1225px;top:593px" width="16" height="16"><use href="#minus"/></svg><svg class="a" style="left:1332px;top:593px" width="16" height="16"><use href="#thumb"/></svg><div class="t" style="left:1351.5px;top:597.84px;font-size:12px;color:#fff;letter-spacing:-0.647px;">Can Pay</div><div class="t" style="left:1429px;top:598.86px;font-size:10.8px;color:#fff;letter-spacing:-0.005px;">10/08/2023 23:59</div><div class="t" style="left:1629px;top:597.18px;font-size:11.6px;color:#fff;letter-spacing:-0.051px;">Renato Barcelos</div><svg class="a" style="left:1851px;top:593px" width="14" height="16"><use href="#pdfr"/></svg><div class="a" style="left:108px;top:0;width:1px;height:604px;background:#2b2b2b"></div><div class="a" style="left:173px;top:0;width:1px;height:604px;background:#2b2b2b"></div><div class="a" style="left:236px;top:0;width:1px;height:604px;background:#2b2b2b"></div><div class="a" style="left:347px;top:0;width:1px;height:604px;background:#2b2b2b"></div><div class="a" style="left:464px;top:0;width:1px;height:604px;background:#2b2b2b"></div><div class="a" style="left:579px;top:0;width:1px;height:604px;background:#2b2b2b"></div><div class="a" style="left:707px;top:0;width:1px;height:604px;background:#2b2b2b"></div><div class="a" style="left:795px;top:0;width:1px;height:604px;background:#2b2b2b"></div><div class="a" style="left:906px;top:0;width:1px;height:604px;background:#2b2b2b"></div><div class="a" style="left:981px;top:0;width:1px;height:604px;background:#2b2b2b"></div><div class="a" style="left:1157px;top:0;width:1px;height:604px;background:#2b2b2b"></div><div class="a" style="left:1308px;top:0;width:1px;height:604px;background:#2b2b2b"></div><div class="a" style="left:1417px;top:0;width:1px;height:604px;background:#2b2b2b"></div><div class="a" style="left:1621px;top:0;width:1px;height:604px;background:#2b2b2b"></div><div class="a" style="left:1794px;top:0;width:1px;height:604px;background:#2b2b2b"></div><div class="a" style="left:0;top:0;width:1px;height:604px;background:#2b2b2b"></div></div><div class="a" style="left:1902px;top:206px;width:17px;height:604px;background:#f0f0f0"></div><div class="a" style="left:1904px;top:223px;width:13px;height:563px;background:#c1c1c1"></div><svg class="a" style="left:1905px;top:210px" width="11" height="8"><path d="M1.5 6h8L5.5 2z" fill="#a3a3a3"/></svg><svg class="a" style="left:1905px;top:796px" width="11" height="8"><path d="M1.5 2h8L5.5 6z" fill="#606060"/></svg><div class="a" style="left:1919px;top:206px;width:1px;height:621px;background:#2a2929"></div><div class="a" style="left:0;top:810px;width:1902px;height:17px;background:#f0f0f0"></div><div class="a" style="left:203px;top:812px;width:746px;height:13px;background:#c1c1c1"></div><svg class="a" style="left:5px;top:813px" width="8" height="11"><path d="M6 1.5v8L2 5.5z" fill="#606060"/></svg><svg class="a" style="left:1891px;top:813px" width="8" height="11"><path d="M2 1.5v8L6 5.5z" fill="#606060"/></svg><div class="a" style="left:1902px;top:810px;width:17px;height:17px;background:#dcdcdc"></div><div class="a" style="left:0;top:827px;width:1920px;height:38px;background:linear-gradient(#272626 0%,#363535 4%,#3c3b3b 30%,#403f3f 47%,#333232 47.5%,#2b2a2a 70%,#272626 100%)"></div><div class="a" style="left:0;top:865px;width:1920px;height:35px;background:linear-gradient(#383737 0%,#3c3b3b 25%,#413f3f 43%,#343333 43.5%,#2d2c2c 65%,#2a2929 85%,#2a2929 100%)"></div><div class="t" style="left:27.5px;top:840.42px;font-size:12.5px;color:#fff;letter-spacing:-0.328px;">New range</div><svg class="a" style="left:7px;top:834px" width="16" height="16" viewBox="0 0 16 16"><path d="M0.5 1h14l-5 5v8.5l-3.5-1.5V6z" fill="#8d8f93"/><rect x="0.5" y="0.5" width="14" height="2" fill="#5ac0ea"/><circle cx="12" cy="12.5" r="2.8" fill="#9ac848"/></svg><div class="t" style="left:111px;top:840.42px;font-size:12.5px;color:#fff;letter-spacing:-0.436px;">Change range</div><svg class="a" style="left:91px;top:834px" width="16" height="16" viewBox="0 0 16 16"><path d="M0.5 1h14l-5 5v8.5l-3.5-1.5V6z" fill="#8d8f93"/><rect x="0.5" y="0.5" width="14" height="2" fill="#5ac0ea"/><path d="M9.5 14.5 L14 9.5" stroke="#f0a030" stroke-width="2.2"/></svg><div class="t" style="left:211.5px;top:840.42px;font-size:12.5px;color:#fff;letter-spacing:-0.438px;">Clear range</div><svg class="a" style="left:191px;top:834px" width="16" height="16" viewBox="0 0 16 16"><path d="M0.5 1h14l-5 5v8.5l-3.5-1.5V6z" fill="#8d8f93"/><rect x="0.5" y="0.5" width="14" height="2" fill="#5ac0ea"/><path d="M10 10l4 4M14 10l-4 4" stroke="#d02020" stroke-width="1.4"/></svg><div class="t" style="left:298.5px;top:840.42px;font-size:12.5px;color:#fff;letter-spacing:-0.506px;">Preset range</div><svg class="a" style="left:278px;top:834px" width="16" height="16" viewBox="0 0 16 16"><path d="M0.5 1h14l-5 5v8.5l-3.5-1.5V6z" fill="#8d8f93"/><rect x="0.5" y="0.5" width="14" height="2" fill="#5ac0ea"/><circle cx="12" cy="12.5" r="2.6" fill="#bbb" stroke="#666" stroke-width="0.8"/></svg><div class="t" style="left:490.5px;top:840.42px;font-size:12.5px;color:#fff;letter-spacing:-0.322px;">Generate export</div><svg class="a" style="left:470px;top:834px" width="16" height="16"><circle cx="8" cy="7.5" r="7.3" fill="#84ac48"/><path d="M6 3.8v7.4l5.8-3.7z" fill="#fff"/></svg><div class="t" style="left:602px;top:840.42px;font-size:12.5px;color:#fff;letter-spacing:-0.270px;">Generate items export</div><svg class="a" style="left:582px;top:834px" width="16" height="16"><circle cx="8" cy="7.5" r="7.3" fill="#84ac48"/><path d="M6 3.8v7.4l5.8-3.7z" fill="#fff"/></svg><div class="t" style="left:745.5px;top:840.42px;font-size:12.5px;color:#fff;letter-spacing:-0.458px;">Generate ERP report</div><svg class="a" style="left:725px;top:834px" width="16" height="16"><circle cx="8" cy="7.5" r="7.3" fill="#84ac48"/><path d="M6 3.8v7.4l5.8-3.7z" fill="#fff"/></svg><div class="t" style="left:879.5px;top:840.42px;font-size:12.5px;color:#fff;letter-spacing:-0.286px;">Generate full excel export</div><svg class="a" style="left:859px;top:834px" width="16" height="16"><circle cx="8" cy="7.5" r="7.3" fill="#3b78da"/><path d="M6 3.8v7.4l5.8-3.7z" fill="#fff"/></svg><div class="t" style="left:1040.5px;top:840.42px;font-size:12.5px;color:#fff;letter-spacing:-0.274px;">Generate full items excel export</div><svg class="a" style="left:1020px;top:834px" width="16" height="16"><circle cx="8" cy="7.5" r="7.3" fill="#3b78da"/><path d="M6 3.8v7.4l5.8-3.7z" fill="#fff"/></svg><div class="t" style="left:1231.5px;top:840.42px;font-size:12.5px;color:#fff;letter-spacing:-0.759px;">Copy files to storage</div><svg class="a" style="left:1214px;top:835px" width="12" height="14"><rect x="3.5" y="0.5" width="8" height="10" fill="#ccc" stroke="#666" stroke-width="0.8"/><rect x="0.5" y="3" width="8" height="10.5" fill="#e8e8e8" stroke="#666" stroke-width="0.8"/></svg><div class="t" style="left:1356px;top:840.42px;font-size:12.5px;color:#fff;letter-spacing:-0.312px;">Export to excel</div><svg class="a" style="left:1336px;top:834px" width="15" height="16"><path d="M2 1h8l3 3v11H2z" fill="#f2f2f2"/><circle cx="3.5" cy="3.5" r="3.3" fill="#2a8a3a"/><path d="M3.5 1.5v3M2 3.5l1.5 1.5 1.5-1.5" stroke="#fff" stroke-width="0.9" fill="none"/><rect x="6" y="8" width="8" height="7" fill="#1e7a34"/><path d="M8 9.5l4 4M12 9.5l-4 4" stroke="#fff" stroke-width="1"/></svg><div class="t" style="left:1458.5px;top:840.42px;font-size:12.5px;color:#fff;letter-spacing:-0.892px;">Send invoice reminders</div><svg class="a" style="left:1442px;top:837px" width="13" height="10"><rect x="0.5" y="0.5" width="12" height="9" fill="#eef" stroke="#c04050" stroke-width="0.8"/><rect x="2.5" y="3.5" width="3" height="2" fill="#3a6ad0"/><rect x="7" y="3" width="4" height="2.5" fill="#3a6ad0"/></svg><div class="t" style="left:1594px;top:840.42px;font-size:12.5px;color:#fff;letter-spacing:-0.884px;">Export invoices</div><svg class="a" style="left:1576px;top:834px" width="13" height="15" viewBox="0 0 14 16"><use href="#pdfr"/></svg><div class="a" style="left:368px;top:834px;width:96px;height:23px;border-radius:4px;background:linear-gradient(#f4b04a,#eea036);border:1px solid #b8502a"></div><svg class="a" style="left:376px;top:835px" width="15" height="15" viewBox="0 0 15 15"><circle cx="7.5" cy="7.5" r="6.8" fill="none" stroke="#a8a8a8" stroke-width="1.6" stroke-dasharray="1.4 1.2"/><circle cx="7.5" cy="7.5" r="5.6" fill="#a0a0a0"/><circle cx="7.5" cy="7.5" r="3.8" fill="#e8a640"/><circle cx="7.5" cy="7.5" r="1.2" fill="#a0a0a0"/><path d="M7.5 3.7V11.3M3.7 7.5H11.3M4.8 4.8L10.2 10.2M10.2 4.8L4.8 10.2" stroke="#a0a0a0" stroke-width="0.9"/></svg><div class="t" style="left:396px;top:840.42px;font-size:12.5px;color:#111;letter-spacing:0.232px;-webkit-text-stroke:0.4px #111;">Grid layout</div><div class="a" style="left:5px;top:869px;width:23px;height:23px;border-radius:50%;background:#2a2929"></div><div class="a" style="left:30px;top:869px;width:23px;height:23px;border-radius:50%;background:#2a2929"></div><div class="a" style="left:315px;top:869px;width:23px;height:23px;border-radius:50%;background:#2a2929"></div><div class="a" style="left:341px;top:869px;width:23px;height:23px;border-radius:50%;background:#2a2929"></div><svg class="a" style="left:11px;top:875px" width="12" height="11"><rect x="1" y="1" width="2" height="9" fill="#8a8a8a"/><path d="M10 1v9L4 5.5z" fill="#8a8a8a"/></svg><svg class="a" style="left:37px;top:875px" width="10" height="11"><path d="M8 1.5v8L3 5.5z" fill="#9a9a9a"/></svg><svg class="a" style="left:322px;top:875px" width="10" height="11"><path d="M2.5 1.5v8L7.5 5.5z" fill="#fff"/></svg><svg class="a" style="left:347px;top:875px" width="12" height="11"><path d="M2 1v9l6-4.5z" fill="#fff"/><rect x="8" y="1" width="2" height="9" fill="#fff"/></svg><div class="a" style="left:55px;top:869px;width:23px;height:23px;border-radius:50%;background:#2d6ad6"></div><div class="t" style="left:63.5px;top:875.42px;font-size:12.5px;color:#fff;">1</div><div class="t" style="left:89px;top:875.42px;font-size:12.5px;color:#fff;">2</div><div class="t" style="left:114px;top:875.42px;font-size:12.5px;color:#fff;">3</div><div class="t" style="left:139px;top:875.42px;font-size:12.5px;color:#fff;">4</div><div class="t" style="left:163px;top:875.42px;font-size:12.5px;color:#fff;">5</div><div class="t" style="left:188px;top:876.53px;font-size:10px;color:#fff;letter-spacing:-0.445px;">...</div><div class="t" style="left:214px;top:875.42px;font-size:12.5px;color:#fff;letter-spacing:-1.548px;">Page</div><div class="a" style="left:243px;top:870px;width:31px;height:21px;background:#fff;border-radius:3px"></div><div class="t" style="left:251px;top:873.27px;font-size:11.5px;color:#222;">1</div><div class="t" style="left:280px;top:875.42px;font-size:12.5px;color:#fff;letter-spacing:-0.560px;">of 20</div><div class="a" style="left:376px;top:869px;width:52px;height:23px;border-radius:3px;background:#2a2929"></div><div class="a" style="left:376px;top:870px;width:30px;height:21px;background:#fff;border-radius:2px"></div><div class="t" style="left:382px;top:873.27px;font-size:11.5px;color:#222;">20</div><svg class="a" style="left:413px;top:878px" width="8" height="7"><use href="#tri"/></svg><div class="t" style="left:434.5px;top:875.42px;font-size:12.5px;color:#fff;letter-spacing:-0.799px;">items per page</div><div class="t" style="left:1745px;top:875.42px;font-size:12.5px;color:#fff;letter-spacing:-0.765px;">1 - 20 of 386 items</div><div class="a" style="left:1845.5px;top:869.5px;width:21px;height:21px;border-radius:50%;background:#2a2929"></div><div class="a" style="left:1869.5px;top:869.5px;width:21px;height:21px;border-radius:50%;background:#2a2929"></div><div class="a" style="left:1893.5px;top:869.5px;width:21px;height:21px;border-radius:50%;background:#2a2929"></div><svg class="a" style="left:1848px;top:872px" width="16" height="16"><path d="M8 1.5v13" stroke="#fff" stroke-width="1.6"/><path d="M1 8h14" stroke="#fff" stroke-width="1.4"/><path d="M1 8l3.5-3v6z M15 8l-3.5-3v6z" fill="#fff"/></svg><svg class="a" style="left:1872px;top:872px" width="16" height="16"><path d="M1 1.5L6 7V14l2.5-1V7l1-1" fill="none" stroke="#fff" stroke-width="1.8"/><path d="M8 1.5h6.5M11 1.5l4 5" stroke="#fff" stroke-width="1.8"/></svg><svg class="a" style="left:1896px;top:872px" width="16" height="16"><path d="M13.5 8.5A5.5 5.5 0 1 1 8.5 3" fill="none" stroke="#fff" stroke-width="2.2"/><path d="M7.5 -0.5l5 3.5l-5 3.5z" fill="#fff"/></svg><div class="t" style="left:849.5px;top:944.13px;font-size:9.3px;color:#fff;letter-spacing:-0.21px">Copyright © 2012 <span style="color:#8a8b8f">O<span style="color:#e8b838">O</span><span style="color:#4ab0e0">O</span>NA.NET</span> ltd. All rights reserved.</div><div class="a" style="left:1877px;top:941px;width:42px;height:12px;border-radius:3px;background:#7a1212"></div><div class="t" style="left:1878px;top:943.80px;font-size:8.5px;color:#fff;letter-spacing:-0.138px;">Zoom:89%</div><div class="a" style="left:792px;top:201px;width:116px;height:40px;border:5px solid #1e9f2c;box-shadow:inset 0 2px 4px 1px rgba(0,0,40,0.5),0 0 4px 1px rgba(0,0,0,0.45)"></div><div class="a" style="left:1155px;top:204px;width:155px;height:37px;border:5px solid #1e9f2c;box-shadow:inset 0 2px 4px 1px rgba(0,0,40,0.5),0 0 4px 1px rgba(0,0,0,0.45)"></div><div class="a" style="left:1305px;top:204px;width:116px;height:37px;border:5px solid #1e9f2c;box-shadow:inset 0 2px 4px 1px rgba(0,0,40,0.5),0 0 4px 1px rgba(0,0,0,0.45)"></div><svg class="a" style="left:0;top:0;filter:drop-shadow(1px 2px 1.5px rgba(0,0,0,0.5))" width="1920" height="955"><path d="M850.5 240.5 L926 318 M1155.5 241.5 L1041.5 318" stroke="#1e9f2c" stroke-width="4.8"/><circle cx="850.5" cy="240.5" r="7" fill="#1e9f2c"/><circle cx="1155.5" cy="241.5" r="7" fill="#1e9f2c"/></svg><div class="a" style="left:692px;top:313px;width:627px;height:170px;border:6px solid #1e9f2c;border-radius:9px;background:#fff;box-shadow:2px 3px 5px rgba(0,0,0,0.45)"></div><div class="t" style="left:819.5px;top:345.80px;font-size:30.6px;color:#1e9f2c;letter-spacing:0.275px;">&quot;Processed by accounting&quot;</div><div class="t" style="left:821px;top:381.80px;font-size:30.6px;color:#1e9f2c;letter-spacing:0.356px;">and &quot;Management review&quot;</div><div class="t" style="left:731.5px;top:417.80px;font-size:30.6px;color:#1e9f2c;letter-spacing:0.312px;">will be disabled by the &quot;On Hold&quot; status</div>
</body></html>
